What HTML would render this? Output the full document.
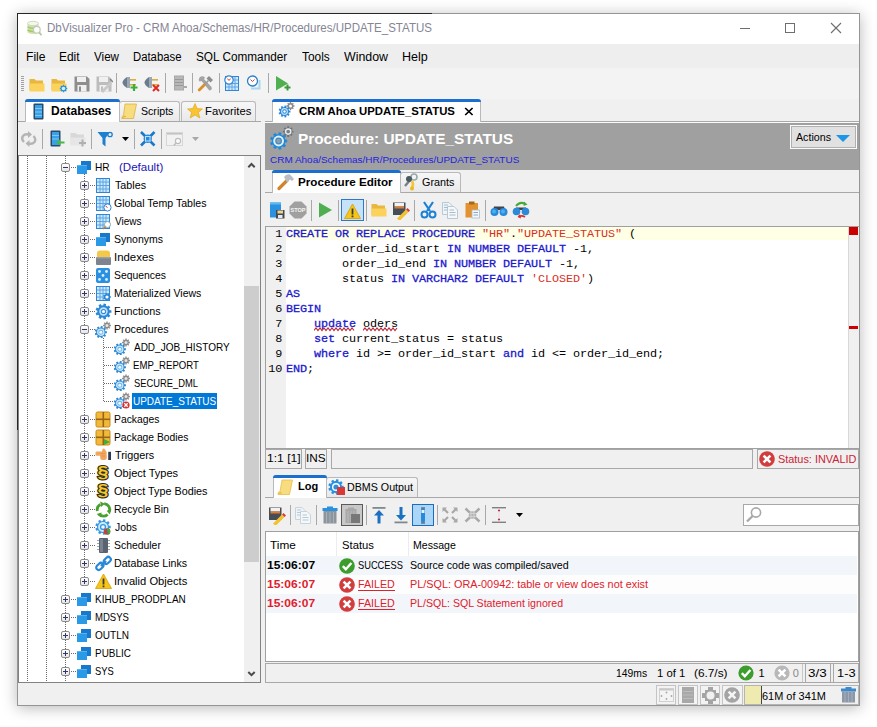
<!DOCTYPE html><html><head><meta charset="utf-8"><style>
html,body{margin:0;padding:0}
body{width:877px;height:727px;background:#fff;position:relative;overflow:hidden;font-family:"Liberation Sans",sans-serif}
body div{position:absolute;box-sizing:border-box}
svg{position:absolute}
</style></head><body>
<div style="left:17px;top:13px;width:843px;height:693px;background:#f0f0f0;box-shadow:0 2px 14px rgba(0,0,0,0.28);"></div>
<div style="left:17px;top:13px;width:843px;height:1px;background:#959595"></div>
<div style="left:17px;top:13px;width:415px;height:1px;background:#262626"></div>
<div style="left:859px;top:13px;width:1px;height:693px;background:#959595"></div>
<div style="left:17px;top:705px;width:843px;height:1px;background:#959595"></div>
<div style="left:17px;top:13px;width:1px;height:693px;background:#959595"></div>
<div style="left:17px;top:13px;width:1px;height:417px;background:#262626"></div>
<div style="left:18px;top:14px;width:841px;height:30px;background:#fff"></div>
<div style="left:18px;top:44px;width:841px;height:24px;background:#eeeeee"></div>
<div style="left:18px;top:68px;width:841px;height:31px;background:#f3f3f3"></div>
<div style="left:47.05234768549734px;top:22.42px;font-family:'Liberation Sans', sans-serif;font-size:12.5px;line-height:12.5px;font-weight:400;color:#858594;white-space:pre;transform:scaleX(0.9242);transform-origin:0 0;">DbVisualizer Pro - CRM Ahoa/Schemas/HR/Procedures/UPDATE_STATUS</div>
<div style="left:25.50553794346299px;top:50.84px;font-family:'Liberation Sans', sans-serif;font-size:12px;line-height:12px;font-weight:400;color:#000;white-space:pre;transform:scaleX(1.0102);transform-origin:0 0;">File</div>
<div style="left:58.520908797475165px;top:50.84px;font-family:'Liberation Sans', sans-serif;font-size:12px;line-height:12px;font-weight:400;color:#000;white-space:pre;transform:scaleX(0.9946);transform-origin:0 0;">Edit</div>
<div style="left:93.94883945137701px;top:50.84px;font-family:'Liberation Sans', sans-serif;font-size:12px;line-height:12px;font-weight:400;color:#000;white-space:pre;transform:scaleX(0.9702);transform-origin:0 0;">View</div>
<div style="left:132.57186684533465px;top:50.84px;font-family:'Liberation Sans', sans-serif;font-size:12px;line-height:12px;font-weight:400;color:#000;white-space:pre;transform:scaleX(0.9429);transform-origin:0 0;">Database</div>
<div style="left:195.9649817814743px;top:50.84px;font-family:'Liberation Sans', sans-serif;font-size:12px;line-height:12px;font-weight:400;color:#000;white-space:pre;transform:scaleX(0.9818);transform-origin:0 0;">SQL Commander</div>
<div style="left:301.7335221421215px;top:50.84px;font-family:'Liberation Sans', sans-serif;font-size:12px;line-height:12px;font-weight:400;color:#000;white-space:pre;transform:scaleX(0.9887);transform-origin:0 0;">Tools</div>
<div style="left:343.9456032000703px;top:50.84px;font-family:'Liberation Sans', sans-serif;font-size:12px;line-height:12px;font-weight:400;color:#000;white-space:pre;transform:scaleX(1.0315);transform-origin:0 0;">Window</div>
<div style="left:402.2727730277121px;top:50.84px;font-family:'Liberation Sans', sans-serif;font-size:12px;line-height:12px;font-weight:400;color:#000;white-space:pre;transform:scaleX(1.0435);transform-origin:0 0;">Help</div>
<div style="left:18px;top:121px;width:243px;height:1px;background:#a8a8a8"></div>
<div style="left:25px;top:99px;width:95px;height:23px;background:#fff;border:1px solid #b9b9b9;border-bottom:none;box-sizing:border-box;border-radius:3px 3px 0 0"></div>
<div style="left:25px;top:99px;width:95px;height:3px;background:#1b6fd0;border-radius:3px 3px 0 0"></div>
<div style="left:51.19364492843262px;top:104.84px;font-family:'Liberation Sans', sans-serif;font-size:12px;line-height:12px;font-weight:700;color:#000;white-space:pre;transform:scaleX(1.0045);transform-origin:0 0;">Databases</div>
<div style="left:119px;top:101px;width:61px;height:20px;background:linear-gradient(#f7f7f7,#e9e9e9);border:1px solid #b9b9b9;border-bottom:none;box-sizing:border-box;border-radius:3px 3px 0 0"></div>
<div style="left:140.5191139681018px;top:105.69px;font-family:'Liberation Sans', sans-serif;font-size:11px;line-height:11px;font-weight:400;color:#000;white-space:pre;transform:scaleX(0.9627);transform-origin:0 0;">Scripts</div>
<div style="left:181px;top:101px;width:75px;height:20px;background:linear-gradient(#f7f7f7,#e9e9e9);border:1px solid #b9b9b9;border-bottom:none;box-sizing:border-box;border-radius:3px 3px 0 0"></div>
<div style="left:204.5757313459112px;top:105.69px;font-family:'Liberation Sans', sans-serif;font-size:11px;line-height:11px;font-weight:400;color:#000;white-space:pre;transform:scaleX(1.0243);transform-origin:0 0;">Favorites</div>
<div style="left:18px;top:155px;width:243px;height:528px;background:#fff;border:1px solid #828282;box-sizing:border-box"></div>
<div style="left:244px;top:156px;width:16px;height:526px;background:#f0f0f0"></div>
<div style="left:94.67093370141146px;top:161.69px;font-family:'Liberation Sans', sans-serif;font-size:11px;line-height:11px;font-weight:400;color:#000;white-space:pre;transform:scaleX(0.9188);transform-origin:0 0;">HR</div>
<div style="left:114.55888324873096px;top:179.69px;font-family:'Liberation Sans', sans-serif;font-size:11px;line-height:11px;font-weight:400;color:#000;white-space:pre;transform:scaleX(0.9759);transform-origin:0 0;">Tables</div>
<div style="left:114.26797400658181px;top:197.69px;font-family:'Liberation Sans', sans-serif;font-size:11px;line-height:11px;font-weight:400;color:#000;white-space:pre;transform:scaleX(0.9617);transform-origin:0 0;">Global Temp Tables</div>
<div style="left:114.7558668293742px;top:215.69px;font-family:'Liberation Sans', sans-serif;font-size:11px;line-height:11px;font-weight:400;color:#000;white-space:pre;transform:scaleX(0.9130);transform-origin:0 0;">Views</div>
<div style="left:114.32280479132689px;top:233.69px;font-family:'Liberation Sans', sans-serif;font-size:11px;line-height:11px;font-weight:400;color:#000;white-space:pre;transform:scaleX(0.9553);transform-origin:0 0;">Synonyms</div>
<div style="left:113.7468816756109px;top:251.69px;font-family:'Liberation Sans', sans-serif;font-size:11px;line-height:11px;font-weight:400;color:#000;white-space:pre;transform:scaleX(1.0374);transform-origin:0 0;">Indexes</div>
<div style="left:114.32948108996106px;top:269.69px;font-family:'Liberation Sans', sans-serif;font-size:11px;line-height:11px;font-weight:400;color:#000;white-space:pre;transform:scaleX(0.9420);transform-origin:0 0;">Sequences</div>
<div style="left:113.93865135888335px;top:287.69px;font-family:'Liberation Sans', sans-serif;font-size:11px;line-height:11px;font-weight:400;color:#000;white-space:pre;transform:scaleX(0.9546);transform-origin:0 0;">Materialized Views</div>
<div style="left:113.91879949979158px;top:305.69px;font-family:'Liberation Sans', sans-serif;font-size:11px;line-height:11px;font-weight:400;color:#000;white-space:pre;transform:scaleX(0.9766);transform-origin:0 0;">Functions</div>
<div style="left:113.92471946136583px;top:323.69px;font-family:'Liberation Sans', sans-serif;font-size:11px;line-height:11px;font-weight:400;color:#000;white-space:pre;transform:scaleX(0.9700);transform-origin:0 0;">Procedures</div>
<div style="left:133.98049554402917px;top:341.69px;font-family:'Liberation Sans', sans-serif;font-size:11px;line-height:11px;font-weight:400;color:#000;white-space:pre;transform:scaleX(0.9078);transform-origin:0 0;">ADD_JOB_HISTORY</div>
<div style="left:133.21327202985515px;top:359.69px;font-family:'Liberation Sans', sans-serif;font-size:11px;line-height:11px;font-weight:400;color:#000;white-space:pre;transform:scaleX(0.8719);transform-origin:0 0;">EMP_REPORT</div>
<div style="left:133.57522829961235px;top:377.69px;font-family:'Liberation Sans', sans-serif;font-size:11px;line-height:11px;font-weight:400;color:#000;white-space:pre;transform:scaleX(0.8504);transform-origin:0 0;">SECURE_DML</div>
<div style="left:132px;top:393px;width:85px;height:16px;background:#0078d7"></div>
<div style="left:133.22959460359442px;top:395.69px;font-family:'Liberation Sans', sans-serif;font-size:11px;line-height:11px;font-weight:400;color:#fff;white-space:pre;transform:scaleX(0.9078);transform-origin:0 0;">UPDATE_STATUS</div>
<div style="left:113.95151515151515px;top:413.69px;font-family:'Liberation Sans', sans-serif;font-size:11px;line-height:11px;font-weight:400;color:#000;white-space:pre;transform:scaleX(0.9403);transform-origin:0 0;">Packages</div>
<div style="left:113.95528714851713px;top:431.69px;font-family:'Liberation Sans', sans-serif;font-size:11px;line-height:11px;font-weight:400;color:#000;white-space:pre;transform:scaleX(0.9361);transform-origin:0 0;">Package Bodies</div>
<div style="left:114.5578801732435px;top:449.69px;font-family:'Liberation Sans', sans-serif;font-size:11px;line-height:11px;font-weight:400;color:#000;white-space:pre;transform:scaleX(0.9800);transform-origin:0 0;">Triggers</div>
<div style="left:114.27796349218784px;top:467.69px;font-family:'Liberation Sans', sans-serif;font-size:11px;line-height:11px;font-weight:400;color:#000;white-space:pre;transform:scaleX(1.0020);transform-origin:0 0;">Object Types</div>
<div style="left:114.28819256568106px;top:485.69px;font-family:'Liberation Sans', sans-serif;font-size:11px;line-height:11px;font-weight:400;color:#000;white-space:pre;transform:scaleX(0.9824);transform-origin:0 0;">Object Type Bodies</div>
<div style="left:113.94815730892901px;top:503.69px;font-family:'Liberation Sans', sans-serif;font-size:11px;line-height:11px;font-weight:400;color:#000;white-space:pre;transform:scaleX(0.9440);transform-origin:0 0;">Recycle Bin</div>
<div style="left:114.6377158890553px;top:521.69px;font-family:'Liberation Sans', sans-serif;font-size:11px;line-height:11px;font-weight:400;color:#000;white-space:pre;transform:scaleX(0.9442);transform-origin:0 0;">Jobs</div>
<div style="left:114.32755749666829px;top:539.69px;font-family:'Liberation Sans', sans-serif;font-size:11px;line-height:11px;font-weight:400;color:#000;white-space:pre;transform:scaleX(0.9458);transform-origin:0 0;">Scheduler</div>
<div style="left:113.93058520299607px;top:557.69px;font-family:'Liberation Sans', sans-serif;font-size:11px;line-height:11px;font-weight:400;color:#000;white-space:pre;transform:scaleX(0.9635);transform-origin:0 0;">Database Links</div>
<div style="left:113.76948443086306px;top:575.69px;font-family:'Liberation Sans', sans-serif;font-size:11px;line-height:11px;font-weight:400;color:#000;white-space:pre;transform:scaleX(1.0151);transform-origin:0 0;">Invalid Objects</div>
<div style="left:94.68338399631648px;top:593.69px;font-family:'Liberation Sans', sans-serif;font-size:11px;line-height:11px;font-weight:400;color:#000;white-space:pre;transform:scaleX(0.9050);transform-origin:0 0;">KIHUB_PRODPLAN</div>
<div style="left:94.71756964621433px;top:611.69px;font-family:'Liberation Sans', sans-serif;font-size:11px;line-height:11px;font-weight:400;color:#000;white-space:pre;transform:scaleX(0.8671);transform-origin:0 0;">MDSYS</div>
<div style="left:95.02493709561466px;top:629.69px;font-family:'Liberation Sans', sans-serif;font-size:11px;line-height:11px;font-weight:400;color:#000;white-space:pre;transform:scaleX(0.9118);transform-origin:0 0;">OUTLN</div>
<div style="left:94.68490844621425px;top:647.69px;font-family:'Liberation Sans', sans-serif;font-size:11px;line-height:11px;font-weight:400;color:#000;white-space:pre;transform:scaleX(0.9033);transform-origin:0 0;">PUBLIC</div>
<div style="left:95.07438050336978px;top:665.69px;font-family:'Liberation Sans', sans-serif;font-size:11px;line-height:11px;font-weight:400;color:#000;white-space:pre;transform:scaleX(0.8521);transform-origin:0 0;">SYS</div>
<div style="left:118.8846464029648px;top:161.69px;font-family:'Liberation Sans', sans-serif;font-size:11px;line-height:11px;font-weight:400;color:#1c14b4;white-space:pre;transform:scaleX(1.0487);transform-origin:0 0;">(Default)</div>
<div style="left:265px;top:121px;width:594px;height:1px;background:#a8a8a8"></div>
<div style="left:272px;top:99px;width:209px;height:23px;background:#fff;border:1px solid #b9b9b9;border-bottom:none;border-radius:3px 3px 0 0"></div>
<div style="left:272px;top:99px;width:209px;height:3px;background:#1b6fd0;border-radius:3px 3px 0 0"></div>
<div style="left:298.83461439478424px;top:105.77px;font-family:'Liberation Sans', sans-serif;font-size:11.5px;line-height:11.5px;font-weight:700;color:#000;white-space:pre;transform:scaleX(0.9867);transform-origin:0 0;">CRM Ahoa UPDATE_STATUS</div>
<svg style="position:absolute;left:464px;top:107px" width="10" height="9" viewBox="0 0 10 9"><path d="M1.2 1 L8.6 8 M8.6 1 L1.2 8" stroke="#000" stroke-width="1.7"/></svg>
<div style="left:265px;top:122px;width:594px;height:1px;background:#fbfbfb"></div>
<div style="left:265px;top:123px;width:594px;height:47px;background:#a0a0a0"></div>
<div style="left:297.97220586312994px;top:131.30px;font-family:'Liberation Sans', sans-serif;font-size:15px;line-height:15px;font-weight:700;color:#fff;white-space:pre;transform:scaleX(1.0243);transform-origin:0 0;">Procedure: UPDATE_STATUS</div>
<div style="left:269.8934209804158px;top:154.87px;font-family:'Liberation Sans', sans-serif;font-size:9.6px;line-height:9.6px;font-weight:400;color:#2222e0;white-space:pre;transform:scaleX(1.0391);transform-origin:0 0;">CRM Ahoa/Schemas/HR/Procedures/UPDATE_STATUS</div>
<div style="left:790px;top:125px;width:67px;height:24px;background:#e1e1e1;border:1px solid #fbfbfb;box-shadow:inset 0 0 0 1px #b0b0b0"></div>
<div style="left:795.9791498439251px;top:132.27px;font-family:'Liberation Sans', sans-serif;font-size:11.5px;line-height:11.5px;font-weight:400;color:#000;white-space:pre;transform:scaleX(0.9283);transform-origin:0 0;">Actions</div>
<svg style="position:absolute;left:835px;top:134px" width="16" height="9" viewBox="0 0 16 9"><path d="M1 1 L15 1 L8 8 Z" fill="#1c96e6"/></svg>
<div style="left:265px;top:192px;width:594px;height:1px;background:#a8a8a8"></div>
<div style="left:272px;top:170px;width:129px;height:23px;background:#fff;border:1px solid #b9b9b9;border-bottom:none;border-radius:3px 3px 0 0"></div>
<div style="left:272px;top:170px;width:129px;height:3px;background:#1b6fd0;border-radius:3px 3px 0 0"></div>
<div style="left:297.6203035314719px;top:177.27px;font-family:'Liberation Sans', sans-serif;font-size:11.5px;line-height:11.5px;font-weight:700;color:#000;white-space:pre;transform:scaleX(1.0135);transform-origin:0 0;">Procedure Editor</div>
<div style="left:400px;top:172px;width:61px;height:20px;background:linear-gradient(#f7f7f7,#e9e9e9);border:1px solid #b9b9b9;border-bottom:none;border-radius:3px 3px 0 0"></div>
<div style="left:422.2564051871461px;top:176.69px;font-family:'Liberation Sans', sans-serif;font-size:11px;line-height:11px;font-weight:400;color:#000;white-space:pre;transform:scaleX(0.9826);transform-origin:0 0;">Grants</div>
<div style="left:265px;top:226px;width:594px;height:223px;background:#fff;border:1px solid #a0a0a0;border-right:none"></div>
<div style="left:266px;top:227px;width:20px;height:221px;background:#f0f0f0"></div>
<div style="left:286px;top:227px;width:562px;height:13px;background:#ffffe6"></div>
<div style="left:848px;top:227px;width:11px;height:221px;background:#f0f0f0;border-left:1px solid #d8d8d8"></div>
<div style="left:849px;top:227px;width:9px;height:8px;background:#cc0000"></div>
<div style="left:849px;top:326px;width:9px;height:3px;background:#cc0000"></div>
<div style="left:275.3px;top:228.96px;font-family:'Liberation Mono', monospace;font-size:11.8px;line-height:11.8px;font-weight:400;color:#000;white-space:pre;letter-spacing:-0.080px;">1</div>
<div style="left:286.0px;top:228.96px;font-family:'Liberation Mono', monospace;font-size:11.8px;line-height:11.8px;font-weight:400;color:#1a1acc;white-space:pre;letter-spacing:-0.080px;-webkit-text-stroke:0.3px #1a1acc;">CREATE OR REPLACE PROCEDURE </div>
<div style="left:482.0px;top:228.96px;font-family:'Liberation Mono', monospace;font-size:11.8px;line-height:11.8px;font-weight:400;color:#d8301e;white-space:pre;letter-spacing:-0.080px;">"HR"</div>
<div style="left:510.0px;top:228.96px;font-family:'Liberation Mono', monospace;font-size:11.8px;line-height:11.8px;font-weight:400;color:#000;white-space:pre;letter-spacing:-0.080px;">.</div>
<div style="left:517.0px;top:228.96px;font-family:'Liberation Mono', monospace;font-size:11.8px;line-height:11.8px;font-weight:400;color:#d8301e;white-space:pre;letter-spacing:-0.080px;">"UPDATE_STATUS"</div>
<div style="left:629.0px;top:228.96px;font-family:'Liberation Mono', monospace;font-size:11.8px;line-height:11.8px;font-weight:400;color:#000;white-space:pre;letter-spacing:-0.080px;">(</div>
<div style="left:275.3px;top:243.96px;font-family:'Liberation Mono', monospace;font-size:11.8px;line-height:11.8px;font-weight:400;color:#000;white-space:pre;letter-spacing:-0.080px;">2</div>
<div style="left:342.0px;top:243.96px;font-family:'Liberation Mono', monospace;font-size:11.8px;line-height:11.8px;font-weight:400;color:#000;white-space:pre;letter-spacing:-0.080px;">order_id_start </div>
<div style="left:447.0px;top:243.96px;font-family:'Liberation Mono', monospace;font-size:11.8px;line-height:11.8px;font-weight:400;color:#1a1acc;white-space:pre;letter-spacing:-0.080px;-webkit-text-stroke:0.3px #1a1acc;">IN NUMBER DEFAULT</div>
<div style="left:573.0px;top:243.96px;font-family:'Liberation Mono', monospace;font-size:11.8px;line-height:11.8px;font-weight:400;color:#000;white-space:pre;letter-spacing:-0.080px;">-1,</div>
<div style="left:275.3px;top:258.96px;font-family:'Liberation Mono', monospace;font-size:11.8px;line-height:11.8px;font-weight:400;color:#000;white-space:pre;letter-spacing:-0.080px;">3</div>
<div style="left:342.0px;top:258.96px;font-family:'Liberation Mono', monospace;font-size:11.8px;line-height:11.8px;font-weight:400;color:#000;white-space:pre;letter-spacing:-0.080px;">order_id_end </div>
<div style="left:433.0px;top:258.96px;font-family:'Liberation Mono', monospace;font-size:11.8px;line-height:11.8px;font-weight:400;color:#1a1acc;white-space:pre;letter-spacing:-0.080px;-webkit-text-stroke:0.3px #1a1acc;">IN NUMBER DEFAULT</div>
<div style="left:559.0px;top:258.96px;font-family:'Liberation Mono', monospace;font-size:11.8px;line-height:11.8px;font-weight:400;color:#000;white-space:pre;letter-spacing:-0.080px;">-1,</div>
<div style="left:275.3px;top:273.96px;font-family:'Liberation Mono', monospace;font-size:11.8px;line-height:11.8px;font-weight:400;color:#000;white-space:pre;letter-spacing:-0.080px;">4</div>
<div style="left:342.0px;top:273.96px;font-family:'Liberation Mono', monospace;font-size:11.8px;line-height:11.8px;font-weight:400;color:#000;white-space:pre;letter-spacing:-0.080px;">status </div>
<div style="left:391.0px;top:273.96px;font-family:'Liberation Mono', monospace;font-size:11.8px;line-height:11.8px;font-weight:400;color:#1a1acc;white-space:pre;letter-spacing:-0.080px;-webkit-text-stroke:0.3px #1a1acc;">IN VARCHAR2 DEFAULT</div>
<div style="left:531.0px;top:273.96px;font-family:'Liberation Mono', monospace;font-size:11.8px;line-height:11.8px;font-weight:400;color:#d8301e;white-space:pre;letter-spacing:-0.080px;">'CLOSED'</div>
<div style="left:587.0px;top:273.96px;font-family:'Liberation Mono', monospace;font-size:11.8px;line-height:11.8px;font-weight:400;color:#000;white-space:pre;letter-spacing:-0.080px;">)</div>
<div style="left:275.3px;top:288.96px;font-family:'Liberation Mono', monospace;font-size:11.8px;line-height:11.8px;font-weight:400;color:#000;white-space:pre;letter-spacing:-0.080px;">5</div>
<div style="left:286.0px;top:288.96px;font-family:'Liberation Mono', monospace;font-size:11.8px;line-height:11.8px;font-weight:400;color:#1a1acc;white-space:pre;letter-spacing:-0.080px;-webkit-text-stroke:0.3px #1a1acc;">AS</div>
<div style="left:275.3px;top:303.96px;font-family:'Liberation Mono', monospace;font-size:11.8px;line-height:11.8px;font-weight:400;color:#000;white-space:pre;letter-spacing:-0.080px;">6</div>
<div style="left:286.0px;top:303.96px;font-family:'Liberation Mono', monospace;font-size:11.8px;line-height:11.8px;font-weight:400;color:#1a1acc;white-space:pre;letter-spacing:-0.080px;-webkit-text-stroke:0.3px #1a1acc;">BEGIN</div>
<div style="left:275.3px;top:318.96px;font-family:'Liberation Mono', monospace;font-size:11.8px;line-height:11.8px;font-weight:400;color:#000;white-space:pre;letter-spacing:-0.080px;">7</div>
<div style="left:314.0px;top:318.96px;font-family:'Liberation Mono', monospace;font-size:11.8px;line-height:11.8px;font-weight:400;color:#1a1acc;white-space:pre;letter-spacing:-0.080px;-webkit-text-stroke:0.3px #1a1acc;">update</div>
<div style="left:363.0px;top:318.96px;font-family:'Liberation Mono', monospace;font-size:11.8px;line-height:11.8px;font-weight:400;color:#000;white-space:pre;letter-spacing:-0.080px;">oders</div>
<div style="left:275.3px;top:333.96px;font-family:'Liberation Mono', monospace;font-size:11.8px;line-height:11.8px;font-weight:400;color:#000;white-space:pre;letter-spacing:-0.080px;">8</div>
<div style="left:314.0px;top:333.96px;font-family:'Liberation Mono', monospace;font-size:11.8px;line-height:11.8px;font-weight:400;color:#1a1acc;white-space:pre;letter-spacing:-0.080px;-webkit-text-stroke:0.3px #1a1acc;">set</div>
<div style="left:342.0px;top:333.96px;font-family:'Liberation Mono', monospace;font-size:11.8px;line-height:11.8px;font-weight:400;color:#000;white-space:pre;letter-spacing:-0.080px;">current_status = status</div>
<div style="left:275.3px;top:348.96px;font-family:'Liberation Mono', monospace;font-size:11.8px;line-height:11.8px;font-weight:400;color:#000;white-space:pre;letter-spacing:-0.080px;">9</div>
<div style="left:314.0px;top:348.96px;font-family:'Liberation Mono', monospace;font-size:11.8px;line-height:11.8px;font-weight:400;color:#1a1acc;white-space:pre;letter-spacing:-0.080px;-webkit-text-stroke:0.3px #1a1acc;">where</div>
<div style="left:356.0px;top:348.96px;font-family:'Liberation Mono', monospace;font-size:11.8px;line-height:11.8px;font-weight:400;color:#000;white-space:pre;letter-spacing:-0.080px;">id &gt;= order_id_start </div>
<div style="left:503.0px;top:348.96px;font-family:'Liberation Mono', monospace;font-size:11.8px;line-height:11.8px;font-weight:400;color:#1a1acc;white-space:pre;letter-spacing:-0.080px;-webkit-text-stroke:0.3px #1a1acc;">and</div>
<div style="left:531.0px;top:348.96px;font-family:'Liberation Mono', monospace;font-size:11.8px;line-height:11.8px;font-weight:400;color:#000;white-space:pre;letter-spacing:-0.080px;">id &lt;= order_id_end;</div>
<div style="left:268.3px;top:363.96px;font-family:'Liberation Mono', monospace;font-size:11.8px;line-height:11.8px;font-weight:400;color:#000;white-space:pre;letter-spacing:-0.080px;">10</div>
<div style="left:286.0px;top:363.96px;font-family:'Liberation Mono', monospace;font-size:11.8px;line-height:11.8px;font-weight:400;color:#1a1acc;white-space:pre;letter-spacing:-0.080px;-webkit-text-stroke:0.3px #1a1acc;">END</div>
<div style="left:307.0px;top:363.96px;font-family:'Liberation Mono', monospace;font-size:11.8px;line-height:11.8px;font-weight:400;color:#000;white-space:pre;letter-spacing:-0.080px;">;</div>
<svg style="position:absolute;left:314px;top:327px" width="42" height="5" viewBox="0 0 42 5"><polyline points="0.0,3.5 2.0,1 4.0,3.5 6.0,1 8.0,3.5 10.0,1 12.0,3.5 14.0,1 16.0,3.5 18.0,1 20.0,3.5 22.0,1 24.0,3.5 26.0,1 28.0,3.5 30.0,1 32.0,3.5 34.0,1 36.0,3.5 38.0,1 40.0,3.5" fill="none" stroke="#b82838" stroke-width="1.1"/></svg>
<svg style="position:absolute;left:363px;top:327px" width="36" height="5" viewBox="0 0 36 5"><polyline points="0.0,3.5 2.0,1 4.0,3.5 6.0,1 8.0,3.5 10.0,1 12.0,3.5 14.0,1 16.0,3.5 18.0,1 20.0,3.5 22.0,1 24.0,3.5 26.0,1 28.0,3.5 30.0,1 32.0,3.5 34.0,1" fill="none" stroke="#b82838" stroke-width="1.1"/></svg>
<div style="left:265px;top:449px;width:37px;height:20px;background:#f0f0f0;border:1px solid #a8a8a8"></div>
<div style="left:266.5797108977308px;top:452.69px;font-family:'Liberation Sans', sans-serif;font-size:11px;line-height:11px;font-weight:400;color:#000;white-space:pre;transform:scaleX(1.0983);transform-origin:0 0;">1:1 [1]</div>
<div style="left:305px;top:449px;width:22px;height:20px;background:#f0f0f0;border:1px solid #a8a8a8"></div>
<div style="left:305.91347394509245px;top:452.69px;font-family:'Liberation Sans', sans-serif;font-size:11px;line-height:11px;font-weight:400;color:#000;white-space:pre;transform:scaleX(1.0703);transform-origin:0 0;">INS</div>
<div style="left:331px;top:449px;width:422px;height:20px;background:#f0f0f0;border:1px solid #a8a8a8"></div>
<div style="left:757px;top:449px;width:102px;height:20px;background:#f0f0f0;border:1px solid #a8a8a8"></div>
<div style="left:778.2058801240003px;top:453.69px;font-family:'Liberation Sans', sans-serif;font-size:11px;line-height:11px;font-weight:400;color:#cc2233;white-space:pre;transform:scaleX(0.9892);transform-origin:0 0;">Status: INVALID</div>
<div style="left:265px;top:497px;width:594px;height:1px;background:#a8a8a8"></div>
<div style="left:273px;top:475px;width:54px;height:23px;background:#fff;border:1px solid #b9b9b9;border-bottom:none;border-radius:3px 3px 0 0"></div>
<div style="left:273px;top:475px;width:54px;height:3px;background:#1b6fd0;border-radius:3px 3px 0 0"></div>
<div style="left:297.7635340247913px;top:481.27px;font-family:'Liberation Sans', sans-serif;font-size:11.5px;line-height:11.5px;font-weight:700;color:#000;white-space:pre;transform:scaleX(0.9573);transform-origin:0 0;">Log</div>
<div style="left:326px;top:477px;width:92px;height:20px;background:linear-gradient(#f7f7f7,#e9e9e9);border:1px solid #b9b9b9;border-bottom:none;border-radius:3px 3px 0 0"></div>
<div style="left:347.422933834514px;top:481.69px;font-family:'Liberation Sans', sans-serif;font-size:11px;line-height:11px;font-weight:400;color:#000;white-space:pre;transform:scaleX(0.9720);transform-origin:0 0;">DBMS Output</div>
<div style="left:743px;top:504px;width:116px;height:22px;background:#fff;border:1px solid #a8a8a8"></div>
<div style="left:265px;top:531px;width:594px;height:131px;background:#fff;border:1px solid #a0a0a0"></div>
<div style="left:336px;top:532px;width:1px;height:24px;background:#ececec"></div>
<div style="left:408px;top:532px;width:1px;height:24px;background:#ececec"></div>
<div style="left:266px;top:556px;width:591px;height:19px;background:#f2f5fa"></div>
<div style="left:266px;top:575px;width:591px;height:19px;background:#fdfdfe"></div>
<div style="left:266px;top:594px;width:591px;height:19px;background:#f2f5fa"></div>
<div style="left:270.43489354246776px;top:539.99px;font-family:'Liberation Sans', sans-serif;font-size:11px;line-height:11px;font-weight:400;color:#000;white-space:pre;transform:scaleX(1.0730);transform-origin:0 0;">Time</div>
<div style="left:341.7887173775795px;top:539.99px;font-family:'Liberation Sans', sans-serif;font-size:11px;line-height:11px;font-weight:400;color:#000;white-space:pre;transform:scaleX(1.0236);transform-origin:0 0;">Status</div>
<div style="left:413.43396037980534px;top:539.99px;font-family:'Liberation Sans', sans-serif;font-size:11px;line-height:11px;font-weight:400;color:#000;white-space:pre;transform:scaleX(0.9598);transform-origin:0 0;">Message</div>
<div style="left:266.9432803718169px;top:559.57px;font-family:'Liberation Sans', sans-serif;font-size:11.5px;line-height:11.5px;font-weight:700;color:#000;white-space:pre;transform:scaleX(1.0447);transform-origin:0 0;">15:06:07</div>
<div style="left:358.4787713959837px;top:559.99px;font-family:'Liberation Sans', sans-serif;font-size:11px;line-height:11px;font-weight:400;color:#000;white-space:pre;transform:scaleX(0.8433);transform-origin:0 0;">SUCCESS</div>
<div style="left:410.2163000046232px;top:559.99px;font-family:'Liberation Sans', sans-serif;font-size:11px;line-height:11px;font-weight:400;color:#000;white-space:pre;transform:scaleX(0.9683);transform-origin:0 0;">Source code was compiled/saved</div>
<div style="left:266.9432803718169px;top:578.57px;font-family:'Liberation Sans', sans-serif;font-size:11.5px;line-height:11.5px;font-weight:700;color:#e0202a;white-space:pre;transform:scaleX(1.0447);transform-origin:0 0;">15:06:07</div>
<div style="left:358.024247529068px;top:578.99px;font-family:'Liberation Sans', sans-serif;font-size:11px;line-height:11px;font-weight:400;color:#e0202a;white-space:pre;transform:scaleX(0.9705);transform-origin:0 0;">FAILED</div>
<div style="left:358px;top:590.3px;width:37px;height:1px;background:#e0202a"></div>
<div style="left:266.9432803718169px;top:597.57px;font-family:'Liberation Sans', sans-serif;font-size:11.5px;line-height:11.5px;font-weight:700;color:#e0202a;white-space:pre;transform:scaleX(1.0447);transform-origin:0 0;">15:06:07</div>
<div style="left:358.024247529068px;top:597.99px;font-family:'Liberation Sans', sans-serif;font-size:11px;line-height:11px;font-weight:400;color:#e0202a;white-space:pre;transform:scaleX(0.9705);transform-origin:0 0;">FAILED</div>
<div style="left:358px;top:609.3px;width:37px;height:1px;background:#e0202a"></div>
<div style="left:409.8108633843466px;top:578.99px;font-family:'Liberation Sans', sans-serif;font-size:11px;line-height:11px;font-weight:400;color:#e0202a;white-space:pre;transform:scaleX(0.9854);transform-origin:0 0;">PL/SQL: ORA-00942: table or view does not exist</div>
<div style="left:409.83238285873233px;top:597.99px;font-family:'Liberation Sans', sans-serif;font-size:11px;line-height:11px;font-weight:400;color:#e0202a;white-space:pre;transform:scaleX(0.9615);transform-origin:0 0;">PL/SQL: SQL Statement ignored</div>
<div style="left:265px;top:663px;width:594px;height:20px;background:#f0f0f0;border:1px solid #a8a8a8"></div>
<div style="left:802px;top:664px;width:1px;height:18px;background:#c8c8c8"></div>
<div style="left:805px;top:663px;width:26px;height:20px;background:#f0f0f0;border:1px solid #a8a8a8"></div>
<div style="left:833px;top:663px;width:26px;height:20px;background:#f0f0f0;border:1px solid #a8a8a8"></div>
<div style="left:615.6116364914748px;top:667.69px;font-family:'Liberation Sans', sans-serif;font-size:11px;line-height:11px;font-weight:400;color:#000;white-space:pre;transform:scaleX(0.9409);transform-origin:0 0;">149ms</div>
<div style="left:656.8378771941359px;top:667.69px;font-family:'Liberation Sans', sans-serif;font-size:11px;line-height:11px;font-weight:400;color:#000;white-space:pre;transform:scaleX(1.0289);transform-origin:0 0;">1 of 1</div>
<div style="left:694.2676844123456px;top:667.69px;font-family:'Liberation Sans', sans-serif;font-size:11px;line-height:11px;font-weight:400;color:#000;white-space:pre;transform:scaleX(1.0736);transform-origin:0 0;">(6.7/s)</div>
<div style="left:758.4px;top:667.69px;font-family:'Liberation Sans', sans-serif;font-size:11px;line-height:11px;font-weight:400;color:#000;white-space:pre;">1</div>
<div style="left:792.7px;top:667.69px;font-family:'Liberation Sans', sans-serif;font-size:11px;line-height:11px;font-weight:400;color:#888;white-space:pre;">0</div>
<div style="left:808.4904282642456px;top:667.69px;font-family:'Liberation Sans', sans-serif;font-size:11px;line-height:11px;font-weight:400;color:#000;white-space:pre;transform:scaleX(1.2163);transform-origin:0 0;">3/3</div>
<div style="left:836.5227292827452px;top:667.69px;font-family:'Liberation Sans', sans-serif;font-size:11px;line-height:11px;font-weight:400;color:#000;white-space:pre;transform:scaleX(1.1663);transform-origin:0 0;">1-3</div>
<div style="left:656px;top:685px;width:20px;height:20px;background:#f3f3f3;border:1px solid #c4c4c4"></div>
<div style="left:678px;top:685px;width:20px;height:20px;background:#f3f3f3;border:1px solid #c4c4c4"></div>
<div style="left:700px;top:685px;width:20px;height:20px;background:#f3f3f3;border:1px solid #c4c4c4"></div>
<div style="left:722px;top:685px;width:21px;height:20px;background:#f3f3f3;border:1px solid #c4c4c4"></div>
<div style="left:744px;top:685px;width:115px;height:20px;background:#f0f0f0;border:1px solid #b4b4b4"></div>
<div style="left:745px;top:686px;width:16px;height:18px;background:#eeeab0"></div>
<div style="left:761px;top:686px;width:1px;height:18px;background:#444"></div>
<div style="left:761.943493150685px;top:690.69px;font-family:'Liberation Sans', sans-serif;font-size:11px;line-height:11px;font-weight:400;color:#000;white-space:pre;transform:scaleX(0.9963);transform-origin:0 0;">61M of 341M</div>
<div style="left:27px;top:156px;width:1px;height:526px;background:repeating-linear-gradient(to bottom,#6a6a6a 0 1px,transparent 1px 2px)"></div>
<div style="left:46px;top:156px;width:1px;height:526px;background:repeating-linear-gradient(to bottom,#6a6a6a 0 1px,transparent 1px 2px)"></div>
<div style="left:65px;top:156px;width:1px;height:526px;background:repeating-linear-gradient(to bottom,#6a6a6a 0 1px,transparent 1px 2px)"></div>
<div style="left:84px;top:172px;width:1px;height:414px;background:repeating-linear-gradient(to bottom,#6a6a6a 0 1px,transparent 1px 2px)"></div>
<div style="left:103px;top:338px;width:1px;height:64px;background:repeating-linear-gradient(to bottom,#6a6a6a 0 1px,transparent 1px 2px)"></div>
<div style="left:61px;top:163px;width:9px;height:9px;background:linear-gradient(#ffffff,#e6e6e6);border:1px solid #8a8a8a;border-radius:2px"></div>
<div style="left:63px;top:167px;width:5px;height:1px;background:#34346a"></div>
<div style="left:71px;top:167px;width:6px;height:1px;background:repeating-linear-gradient(to right,#6a6a6a 0 1px,transparent 1px 2px)"></div>
<svg style="position:absolute;left:76px;top:159px" width="16" height="16" viewBox="0 0 16 16"><rect x="5" y="2" width="10" height="9" fill="#1a78cc"/><rect x="1" y="6" width="10" height="9" fill="#2a9ae6"/><rect x="1" y="6" width="10" height="1" fill="#55b4f0"/></svg>
<div style="left:80px;top:181px;width:9px;height:9px;background:linear-gradient(#ffffff,#e6e6e6);border:1px solid #8a8a8a;border-radius:2px"></div>
<div style="left:82px;top:185px;width:5px;height:1px;background:#34346a"></div>
<div style="left:84px;top:183px;width:1px;height:5px;background:#34346a"></div>
<div style="left:90px;top:185px;width:5px;height:1px;background:repeating-linear-gradient(to right,#6a6a6a 0 1px,transparent 1px 2px)"></div>
<svg style="position:absolute;left:95px;top:177px" width="17" height="17" viewBox="0 0 17 17"><rect x="1.5" y="1.5" width="13" height="14" fill="#cfe8fb" stroke="#2f86d6"/><line x1="5.0" y1="2" x2="5.0" y2="15" stroke="#5aa6e4"/><line x1="8.0" y1="2" x2="8.0" y2="15" stroke="#5aa6e4"/><line x1="11.0" y1="2" x2="11.0" y2="15" stroke="#5aa6e4"/><line x1="2" y1="5.0" x2="14" y2="5.0" stroke="#5aa6e4"/><line x1="2" y1="8.5" x2="14" y2="8.5" stroke="#5aa6e4"/><line x1="2" y1="12.0" x2="14" y2="12.0" stroke="#5aa6e4"/></svg>
<div style="left:80px;top:199px;width:9px;height:9px;background:linear-gradient(#ffffff,#e6e6e6);border:1px solid #8a8a8a;border-radius:2px"></div>
<div style="left:82px;top:203px;width:5px;height:1px;background:#34346a"></div>
<div style="left:84px;top:201px;width:1px;height:5px;background:#34346a"></div>
<div style="left:90px;top:203px;width:5px;height:1px;background:repeating-linear-gradient(to right,#6a6a6a 0 1px,transparent 1px 2px)"></div>
<svg style="position:absolute;left:95px;top:195px" width="17" height="17" viewBox="0 0 17 17"><rect x="1.5" y="1.5" width="13" height="14" fill="#cfe8fb" stroke="#2f86d6"/><line x1="5.0" y1="2" x2="5.0" y2="15" stroke="#5aa6e4"/><line x1="8.0" y1="2" x2="8.0" y2="15" stroke="#5aa6e4"/><line x1="11.0" y1="2" x2="11.0" y2="15" stroke="#5aa6e4"/><line x1="2" y1="5.0" x2="14" y2="5.0" stroke="#5aa6e4"/><line x1="2" y1="8.5" x2="14" y2="8.5" stroke="#5aa6e4"/><line x1="2" y1="12.0" x2="14" y2="12.0" stroke="#5aa6e4"/><circle cx="12.5" cy="12.5" r="3.6" fill="#fff" stroke="#2f86d6" stroke-width="1"/><path d="M12.5 12.5 L10.5 11" stroke="#d03030" stroke-width="1"/></svg>
<div style="left:80px;top:217px;width:9px;height:9px;background:linear-gradient(#ffffff,#e6e6e6);border:1px solid #8a8a8a;border-radius:2px"></div>
<div style="left:82px;top:221px;width:5px;height:1px;background:#34346a"></div>
<div style="left:84px;top:219px;width:1px;height:5px;background:#34346a"></div>
<div style="left:90px;top:221px;width:5px;height:1px;background:repeating-linear-gradient(to right,#6a6a6a 0 1px,transparent 1px 2px)"></div>
<svg style="position:absolute;left:95px;top:213px" width="17" height="17" viewBox="0 0 17 17"><rect x="1.5" y="1.5" width="13" height="14" fill="#cfe8fb" stroke="#2f86d6"/><line x1="5.0" y1="2" x2="5.0" y2="15" stroke="#5aa6e4"/><line x1="8.0" y1="2" x2="8.0" y2="15" stroke="#5aa6e4"/><line x1="11.0" y1="2" x2="11.0" y2="15" stroke="#5aa6e4"/><line x1="2" y1="5.0" x2="14" y2="5.0" stroke="#5aa6e4"/><line x1="2" y1="8.5" x2="14" y2="8.5" stroke="#5aa6e4"/><line x1="2" y1="12.0" x2="14" y2="12.0" stroke="#5aa6e4"/><circle cx="12.5" cy="11.5" r="3" fill="#fff" stroke="#8aa" stroke-width="1"/><path d="M10.5 13.5 L8 16" stroke="#c87a30" stroke-width="1.5"/></svg>
<div style="left:80px;top:235px;width:9px;height:9px;background:linear-gradient(#ffffff,#e6e6e6);border:1px solid #8a8a8a;border-radius:2px"></div>
<div style="left:82px;top:239px;width:5px;height:1px;background:#34346a"></div>
<div style="left:84px;top:237px;width:1px;height:5px;background:#34346a"></div>
<div style="left:90px;top:239px;width:5px;height:1px;background:repeating-linear-gradient(to right,#6a6a6a 0 1px,transparent 1px 2px)"></div>
<svg style="position:absolute;left:95px;top:231px" width="16" height="16" viewBox="0 0 16 16"><rect x="5" y="2" width="10" height="9" fill="#1a78cc"/><rect x="1" y="6" width="10" height="9" fill="#2a9ae6"/><rect x="1" y="6" width="10" height="1" fill="#55b4f0"/></svg>
<div style="left:80px;top:253px;width:9px;height:9px;background:linear-gradient(#ffffff,#e6e6e6);border:1px solid #8a8a8a;border-radius:2px"></div>
<div style="left:82px;top:257px;width:5px;height:1px;background:#34346a"></div>
<div style="left:84px;top:255px;width:1px;height:5px;background:#34346a"></div>
<div style="left:90px;top:257px;width:5px;height:1px;background:repeating-linear-gradient(to right,#6a6a6a 0 1px,transparent 1px 2px)"></div>
<svg style="position:absolute;left:95px;top:249px" width="17" height="17" viewBox="0 0 17 17"><path d="M2 4 Q2 1.5 5 1.5 L12 1.5 Q15 1.5 15 4 L15 9 L2 9 Z" fill="#f4c94a"/><rect x="1" y="8" width="15" height="8" rx="1" fill="#7d8490"/><rect x="1" y="8" width="15" height="1.5" fill="#9aa0aa"/></svg>
<div style="left:80px;top:271px;width:9px;height:9px;background:linear-gradient(#ffffff,#e6e6e6);border:1px solid #8a8a8a;border-radius:2px"></div>
<div style="left:82px;top:275px;width:5px;height:1px;background:#34346a"></div>
<div style="left:84px;top:273px;width:1px;height:5px;background:#34346a"></div>
<div style="left:90px;top:275px;width:5px;height:1px;background:repeating-linear-gradient(to right,#6a6a6a 0 1px,transparent 1px 2px)"></div>
<svg style="position:absolute;left:95px;top:267px" width="16" height="17" viewBox="0 0 16 17"><rect x="1" y="1" width="14" height="15" rx="2" fill="#2a90e0"/><circle cx="4.5" cy="4.5" r="1.4" fill="#d8efff"/><circle cx="11.5" cy="4.5" r="1.4" fill="#d8efff"/><circle cx="8" cy="8.5" r="1.4" fill="#d8efff"/><circle cx="4.5" cy="12.5" r="1.4" fill="#d8efff"/><circle cx="11.5" cy="12.5" r="1.4" fill="#d8efff"/></svg>
<div style="left:80px;top:289px;width:9px;height:9px;background:linear-gradient(#ffffff,#e6e6e6);border:1px solid #8a8a8a;border-radius:2px"></div>
<div style="left:82px;top:293px;width:5px;height:1px;background:#34346a"></div>
<div style="left:84px;top:291px;width:1px;height:5px;background:#34346a"></div>
<div style="left:90px;top:293px;width:5px;height:1px;background:repeating-linear-gradient(to right,#6a6a6a 0 1px,transparent 1px 2px)"></div>
<svg style="position:absolute;left:95px;top:285px" width="17" height="17" viewBox="0 0 17 17"><rect x="1.5" y="1.5" width="13" height="14" fill="#cfe8fb" stroke="#2f86d6"/><line x1="5.0" y1="2" x2="5.0" y2="15" stroke="#5aa6e4"/><line x1="8.0" y1="2" x2="8.0" y2="15" stroke="#5aa6e4"/><line x1="11.0" y1="2" x2="11.0" y2="15" stroke="#5aa6e4"/><line x1="2" y1="5.0" x2="14" y2="5.0" stroke="#5aa6e4"/><line x1="2" y1="8.5" x2="14" y2="8.5" stroke="#5aa6e4"/><line x1="2" y1="12.0" x2="14" y2="12.0" stroke="#5aa6e4"/><path d="M14.89,11.20 L15.92,11.20 L15.92,12.80 L14.89,12.80 L14.43,13.76 L15.07,14.56 L13.82,15.56 L13.18,14.76 L12.13,15.00 L11.91,16.00 L10.35,15.64 L10.58,14.64 L9.74,13.97 L8.82,14.42 L8.12,12.98 L9.05,12.54 L9.05,11.46 L8.12,11.02 L8.82,9.58 L9.74,10.03 L10.58,9.36 L10.35,8.36 L11.91,8.00 L12.13,9.00 L13.18,9.24 L13.82,8.44 L15.07,9.44 L14.43,10.24 Z" fill="#2a88d8"/><circle cx="12" cy="12" r="1.6" fill="#fff"/></svg>
<div style="left:80px;top:307px;width:9px;height:9px;background:linear-gradient(#ffffff,#e6e6e6);border:1px solid #8a8a8a;border-radius:2px"></div>
<div style="left:82px;top:311px;width:5px;height:1px;background:#34346a"></div>
<div style="left:84px;top:309px;width:1px;height:5px;background:#34346a"></div>
<div style="left:90px;top:311px;width:5px;height:1px;background:repeating-linear-gradient(to right,#6a6a6a 0 1px,transparent 1px 2px)"></div>
<svg style="position:absolute;left:95px;top:303px" width="17" height="17" viewBox="0 0 17 17"><path d="M14.56,7.21 L16.40,7.25 L16.40,9.75 L14.56,9.79 L13.97,11.41 L15.36,12.62 L13.75,14.54 L12.32,13.39 L10.82,14.25 L11.10,16.06 L8.64,16.50 L8.28,14.70 L6.58,14.40 L5.63,15.97 L3.47,14.72 L4.35,13.11 L3.24,11.79 L1.50,12.38 L0.65,10.03 L2.36,9.36 L2.36,7.64 L0.65,6.97 L1.50,4.62 L3.24,5.21 L4.35,3.89 L3.47,2.28 L5.63,1.03 L6.58,2.60 L8.28,2.30 L8.64,0.50 L11.10,0.94 L10.82,2.75 L12.32,3.61 L13.75,2.46 L15.36,4.38 L13.97,5.59 Z" fill="#2a88d8"/><circle cx="8.5" cy="8.5" r="4.2" fill="#bfe0fa"/><circle cx="8.5" cy="8.5" r="2.6" fill="#2a88d8"/><circle cx="8.5" cy="8.5" r="1.6" fill="#fff"/></svg>
<div style="left:80px;top:325px;width:9px;height:9px;background:linear-gradient(#ffffff,#e6e6e6);border:1px solid #8a8a8a;border-radius:2px"></div>
<div style="left:82px;top:329px;width:5px;height:1px;background:#34346a"></div>
<div style="left:90px;top:329px;width:5px;height:1px;background:repeating-linear-gradient(to right,#6a6a6a 0 1px,transparent 1px 2px)"></div>
<svg style="position:absolute;left:95px;top:321px" width="17" height="17" viewBox="0 0 17 17"><path d="M14.82,3.82 L15.94,3.80 L15.94,5.20 L14.82,5.18 L14.47,6.02 L15.28,6.79 L14.29,7.78 L13.52,6.97 L12.68,7.32 L12.70,8.44 L11.30,8.44 L11.32,7.32 L10.48,6.97 L9.71,7.78 L8.72,6.79 L9.53,6.02 L9.18,5.18 L8.06,5.20 L8.06,3.80 L9.18,3.82 L9.53,2.98 L8.72,2.21 L9.71,1.22 L10.48,2.03 L11.32,1.68 L11.30,0.56 L12.70,0.56 L12.68,1.68 L13.52,2.03 L14.29,1.22 L15.28,2.21 L14.47,2.98 Z" fill="#8c8c8c"/><circle cx="12" cy="4.5" r="1.5" fill="#e6e6e6"/><path d="M10.40,10.22 L11.92,10.23 L11.92,12.17 L10.40,12.18 L9.95,13.41 L11.11,14.39 L9.87,15.88 L8.69,14.90 L7.56,15.56 L7.82,17.06 L5.91,17.40 L5.64,15.90 L4.35,15.67 L3.58,16.99 L1.90,16.02 L2.66,14.69 L1.81,13.69 L0.38,14.21 L-0.29,12.38 L1.15,11.85 L1.15,10.55 L-0.29,10.02 L0.38,8.19 L1.81,8.71 L2.66,7.71 L1.90,6.38 L3.58,5.41 L4.35,6.73 L5.64,6.50 L5.91,5.00 L7.82,5.34 L7.56,6.84 L8.69,7.50 L9.87,6.52 L11.11,8.01 L9.95,8.99 Z" fill="#2f8ad6"/><circle cx="5.8" cy="11.2" r="3.1" fill="#6ab4ec" stroke="#c8e8fc" stroke-width="1.3"/><circle cx="5.8" cy="11.2" r="1.5" fill="#f0f6fa"/></svg>
<div style="left:104px;top:347px;width:10px;height:1px;background:repeating-linear-gradient(to right,#6a6a6a 0 1px,transparent 1px 2px)"></div>
<svg style="position:absolute;left:114px;top:338px" width="17" height="17" viewBox="0 0 17 17"><path d="M14.82,3.82 L15.94,3.80 L15.94,5.20 L14.82,5.18 L14.47,6.02 L15.28,6.79 L14.29,7.78 L13.52,6.97 L12.68,7.32 L12.70,8.44 L11.30,8.44 L11.32,7.32 L10.48,6.97 L9.71,7.78 L8.72,6.79 L9.53,6.02 L9.18,5.18 L8.06,5.20 L8.06,3.80 L9.18,3.82 L9.53,2.98 L8.72,2.21 L9.71,1.22 L10.48,2.03 L11.32,1.68 L11.30,0.56 L12.70,0.56 L12.68,1.68 L13.52,2.03 L14.29,1.22 L15.28,2.21 L14.47,2.98 Z" fill="#8c8c8c"/><circle cx="12" cy="4.5" r="1.5" fill="#e6e6e6"/><path d="M10.40,10.22 L11.92,10.23 L11.92,12.17 L10.40,12.18 L9.95,13.41 L11.11,14.39 L9.87,15.88 L8.69,14.90 L7.56,15.56 L7.82,17.06 L5.91,17.40 L5.64,15.90 L4.35,15.67 L3.58,16.99 L1.90,16.02 L2.66,14.69 L1.81,13.69 L0.38,14.21 L-0.29,12.38 L1.15,11.85 L1.15,10.55 L-0.29,10.02 L0.38,8.19 L1.81,8.71 L2.66,7.71 L1.90,6.38 L3.58,5.41 L4.35,6.73 L5.64,6.50 L5.91,5.00 L7.82,5.34 L7.56,6.84 L8.69,7.50 L9.87,6.52 L11.11,8.01 L9.95,8.99 Z" fill="#2f8ad6"/><circle cx="5.8" cy="11.2" r="3.1" fill="#6ab4ec" stroke="#c8e8fc" stroke-width="1.3"/><circle cx="5.8" cy="11.2" r="1.5" fill="#f0f6fa"/></svg>
<div style="left:104px;top:365px;width:10px;height:1px;background:repeating-linear-gradient(to right,#6a6a6a 0 1px,transparent 1px 2px)"></div>
<svg style="position:absolute;left:114px;top:356px" width="17" height="17" viewBox="0 0 17 17"><path d="M14.82,3.82 L15.94,3.80 L15.94,5.20 L14.82,5.18 L14.47,6.02 L15.28,6.79 L14.29,7.78 L13.52,6.97 L12.68,7.32 L12.70,8.44 L11.30,8.44 L11.32,7.32 L10.48,6.97 L9.71,7.78 L8.72,6.79 L9.53,6.02 L9.18,5.18 L8.06,5.20 L8.06,3.80 L9.18,3.82 L9.53,2.98 L8.72,2.21 L9.71,1.22 L10.48,2.03 L11.32,1.68 L11.30,0.56 L12.70,0.56 L12.68,1.68 L13.52,2.03 L14.29,1.22 L15.28,2.21 L14.47,2.98 Z" fill="#8c8c8c"/><circle cx="12" cy="4.5" r="1.5" fill="#e6e6e6"/><path d="M10.40,10.22 L11.92,10.23 L11.92,12.17 L10.40,12.18 L9.95,13.41 L11.11,14.39 L9.87,15.88 L8.69,14.90 L7.56,15.56 L7.82,17.06 L5.91,17.40 L5.64,15.90 L4.35,15.67 L3.58,16.99 L1.90,16.02 L2.66,14.69 L1.81,13.69 L0.38,14.21 L-0.29,12.38 L1.15,11.85 L1.15,10.55 L-0.29,10.02 L0.38,8.19 L1.81,8.71 L2.66,7.71 L1.90,6.38 L3.58,5.41 L4.35,6.73 L5.64,6.50 L5.91,5.00 L7.82,5.34 L7.56,6.84 L8.69,7.50 L9.87,6.52 L11.11,8.01 L9.95,8.99 Z" fill="#2f8ad6"/><circle cx="5.8" cy="11.2" r="3.1" fill="#6ab4ec" stroke="#c8e8fc" stroke-width="1.3"/><circle cx="5.8" cy="11.2" r="1.5" fill="#f0f6fa"/></svg>
<div style="left:104px;top:383px;width:10px;height:1px;background:repeating-linear-gradient(to right,#6a6a6a 0 1px,transparent 1px 2px)"></div>
<svg style="position:absolute;left:114px;top:374px" width="17" height="17" viewBox="0 0 17 17"><path d="M14.82,3.82 L15.94,3.80 L15.94,5.20 L14.82,5.18 L14.47,6.02 L15.28,6.79 L14.29,7.78 L13.52,6.97 L12.68,7.32 L12.70,8.44 L11.30,8.44 L11.32,7.32 L10.48,6.97 L9.71,7.78 L8.72,6.79 L9.53,6.02 L9.18,5.18 L8.06,5.20 L8.06,3.80 L9.18,3.82 L9.53,2.98 L8.72,2.21 L9.71,1.22 L10.48,2.03 L11.32,1.68 L11.30,0.56 L12.70,0.56 L12.68,1.68 L13.52,2.03 L14.29,1.22 L15.28,2.21 L14.47,2.98 Z" fill="#8c8c8c"/><circle cx="12" cy="4.5" r="1.5" fill="#e6e6e6"/><path d="M10.40,10.22 L11.92,10.23 L11.92,12.17 L10.40,12.18 L9.95,13.41 L11.11,14.39 L9.87,15.88 L8.69,14.90 L7.56,15.56 L7.82,17.06 L5.91,17.40 L5.64,15.90 L4.35,15.67 L3.58,16.99 L1.90,16.02 L2.66,14.69 L1.81,13.69 L0.38,14.21 L-0.29,12.38 L1.15,11.85 L1.15,10.55 L-0.29,10.02 L0.38,8.19 L1.81,8.71 L2.66,7.71 L1.90,6.38 L3.58,5.41 L4.35,6.73 L5.64,6.50 L5.91,5.00 L7.82,5.34 L7.56,6.84 L8.69,7.50 L9.87,6.52 L11.11,8.01 L9.95,8.99 Z" fill="#2f8ad6"/><circle cx="5.8" cy="11.2" r="3.1" fill="#6ab4ec" stroke="#c8e8fc" stroke-width="1.3"/><circle cx="5.8" cy="11.2" r="1.5" fill="#f0f6fa"/></svg>
<div style="left:104px;top:401px;width:10px;height:1px;background:repeating-linear-gradient(to right,#6a6a6a 0 1px,transparent 1px 2px)"></div>
<svg style="position:absolute;left:114px;top:392px" width="17" height="17" viewBox="0 0 17 17"><path d="M14.82,3.82 L15.94,3.80 L15.94,5.20 L14.82,5.18 L14.47,6.02 L15.28,6.79 L14.29,7.78 L13.52,6.97 L12.68,7.32 L12.70,8.44 L11.30,8.44 L11.32,7.32 L10.48,6.97 L9.71,7.78 L8.72,6.79 L9.53,6.02 L9.18,5.18 L8.06,5.20 L8.06,3.80 L9.18,3.82 L9.53,2.98 L8.72,2.21 L9.71,1.22 L10.48,2.03 L11.32,1.68 L11.30,0.56 L12.70,0.56 L12.68,1.68 L13.52,2.03 L14.29,1.22 L15.28,2.21 L14.47,2.98 Z" fill="#8c8c8c"/><circle cx="12" cy="4.5" r="1.5" fill="#e6e6e6"/><path d="M10.40,10.22 L11.92,10.23 L11.92,12.17 L10.40,12.18 L9.95,13.41 L11.11,14.39 L9.87,15.88 L8.69,14.90 L7.56,15.56 L7.82,17.06 L5.91,17.40 L5.64,15.90 L4.35,15.67 L3.58,16.99 L1.90,16.02 L2.66,14.69 L1.81,13.69 L0.38,14.21 L-0.29,12.38 L1.15,11.85 L1.15,10.55 L-0.29,10.02 L0.38,8.19 L1.81,8.71 L2.66,7.71 L1.90,6.38 L3.58,5.41 L4.35,6.73 L5.64,6.50 L5.91,5.00 L7.82,5.34 L7.56,6.84 L8.69,7.50 L9.87,6.52 L11.11,8.01 L9.95,8.99 Z" fill="#2f8ad6"/><circle cx="5.8" cy="11.2" r="3.1" fill="#6ab4ec" stroke="#c8e8fc" stroke-width="1.3"/><circle cx="5.8" cy="11.2" r="1.5" fill="#f0f6fa"/><circle cx="12" cy="13" r="3.6" fill="#d83030"/><path d="M10.3 11.3 L13.7 14.7 M13.7 11.3 L10.3 14.7" stroke="#fff" stroke-width="1.3"/></svg>
<div style="left:80px;top:415px;width:9px;height:9px;background:linear-gradient(#ffffff,#e6e6e6);border:1px solid #8a8a8a;border-radius:2px"></div>
<div style="left:82px;top:419px;width:5px;height:1px;background:#34346a"></div>
<div style="left:84px;top:417px;width:1px;height:5px;background:#34346a"></div>
<div style="left:90px;top:419px;width:5px;height:1px;background:repeating-linear-gradient(to right,#6a6a6a 0 1px,transparent 1px 2px)"></div>
<svg style="position:absolute;left:95px;top:411px" width="17" height="17" viewBox="0 0 17 17"><rect x="1" y="1" width="14" height="15" rx="1.5" fill="#f0b93a" stroke="#c98a1a" stroke-width="1"/><rect x="7.5" y="1" width="1.6" height="15" fill="#9a6414"/><rect x="1" y="7.5" width="14" height="1.6" fill="#9a6414"/></svg>
<div style="left:80px;top:433px;width:9px;height:9px;background:linear-gradient(#ffffff,#e6e6e6);border:1px solid #8a8a8a;border-radius:2px"></div>
<div style="left:82px;top:437px;width:5px;height:1px;background:#34346a"></div>
<div style="left:84px;top:435px;width:1px;height:5px;background:#34346a"></div>
<div style="left:90px;top:437px;width:5px;height:1px;background:repeating-linear-gradient(to right,#6a6a6a 0 1px,transparent 1px 2px)"></div>
<svg style="position:absolute;left:95px;top:429px" width="17" height="17" viewBox="0 0 17 17"><rect x="1" y="1" width="14" height="15" rx="1.5" fill="#f0b93a" stroke="#c98a1a" stroke-width="1"/><rect x="7.5" y="1" width="1.6" height="15" fill="#9a6414"/><rect x="1" y="7.5" width="14" height="1.6" fill="#9a6414"/><path d="M9 10 L15 13 L9 16 Z" fill="#3fae3f"/></svg>
<div style="left:80px;top:451px;width:9px;height:9px;background:linear-gradient(#ffffff,#e6e6e6);border:1px solid #8a8a8a;border-radius:2px"></div>
<div style="left:82px;top:455px;width:5px;height:1px;background:#34346a"></div>
<div style="left:84px;top:453px;width:1px;height:5px;background:#34346a"></div>
<div style="left:90px;top:455px;width:5px;height:1px;background:repeating-linear-gradient(to right,#6a6a6a 0 1px,transparent 1px 2px)"></div>
<svg style="position:absolute;left:95px;top:447px" width="17" height="17" viewBox="0 0 17 17"><path d="M0.5 5.8 Q0.5 4.6 1.7 4.6 L7 4.6 L7.6 2 Q8.6 0.8 9.6 2 L11.6 5 L11.8 11 Q11.6 13 9.6 13 L7.2 13 Q5.2 12.8 5.2 11 L5.2 8.8 L1.7 8.8 Q0.5 8.8 0.5 7.6 Z" fill="#f2a65e"/><path d="M5.5 6.5 L10 6.5 M6 9 L10 9" stroke="#e08a40" stroke-width="0.7"/><rect x="13.2" y="4.8" width="2.8" height="8.2" fill="#2c3a52"/></svg>
<div style="left:80px;top:469px;width:9px;height:9px;background:linear-gradient(#ffffff,#e6e6e6);border:1px solid #8a8a8a;border-radius:2px"></div>
<div style="left:82px;top:473px;width:5px;height:1px;background:#34346a"></div>
<div style="left:84px;top:471px;width:1px;height:5px;background:#34346a"></div>
<div style="left:90px;top:473px;width:5px;height:1px;background:repeating-linear-gradient(to right,#6a6a6a 0 1px,transparent 1px 2px)"></div>
<svg style="position:absolute;left:96px;top:463px" width="15" height="19" viewBox="0 0 15 19"><text x="7" y="15.2" text-anchor="middle" font-family="Liberation Sans" font-weight="bold" font-size="17" fill="#f4c832" stroke="#2e2e16" stroke-width="2.2" paint-order="stroke" transform="translate(7 9) scale(1.15 1) translate(-7 -9)">§</text></svg>
<div style="left:80px;top:487px;width:9px;height:9px;background:linear-gradient(#ffffff,#e6e6e6);border:1px solid #8a8a8a;border-radius:2px"></div>
<div style="left:82px;top:491px;width:5px;height:1px;background:#34346a"></div>
<div style="left:84px;top:489px;width:1px;height:5px;background:#34346a"></div>
<div style="left:90px;top:491px;width:5px;height:1px;background:repeating-linear-gradient(to right,#6a6a6a 0 1px,transparent 1px 2px)"></div>
<svg style="position:absolute;left:96px;top:481px" width="15" height="19" viewBox="0 0 15 19"><text x="7" y="15.2" text-anchor="middle" font-family="Liberation Sans" font-weight="bold" font-size="17" fill="#f4c832" stroke="#2e2e16" stroke-width="2.2" paint-order="stroke" transform="translate(7 9) scale(1.15 1) translate(-7 -9)">§</text></svg>
<div style="left:80px;top:505px;width:9px;height:9px;background:linear-gradient(#ffffff,#e6e6e6);border:1px solid #8a8a8a;border-radius:2px"></div>
<div style="left:82px;top:509px;width:5px;height:1px;background:#34346a"></div>
<div style="left:84px;top:507px;width:1px;height:5px;background:#34346a"></div>
<div style="left:90px;top:509px;width:5px;height:1px;background:repeating-linear-gradient(to right,#6a6a6a 0 1px,transparent 1px 2px)"></div>
<svg style="position:absolute;left:95px;top:501px" width="17" height="17" viewBox="0 0 17 17"><path d="M9.2 2.6 A6 6 0 0 1 14.3 10.6" stroke="#48a030" stroke-width="2.8" fill="none"/><path d="M12.6 13.4 A6 6 0 0 1 4 13.3" stroke="#48a030" stroke-width="2.8" fill="none"/><path d="M2.4 10 A6 6 0 0 1 5.4 3.4" stroke="#48a030" stroke-width="2.8" fill="none"/><path d="M5.2 0.6 L10 2.8 L6 6 Z M16.4 8.4 L14.8 13.4 L11.6 9.8 Z M6 16.2 L1.6 13 L6.6 11.4 Z" fill="#48a030"/></svg>
<div style="left:80px;top:523px;width:9px;height:9px;background:linear-gradient(#ffffff,#e6e6e6);border:1px solid #8a8a8a;border-radius:2px"></div>
<div style="left:82px;top:527px;width:5px;height:1px;background:#34346a"></div>
<div style="left:84px;top:525px;width:1px;height:5px;background:#34346a"></div>
<div style="left:90px;top:527px;width:5px;height:1px;background:repeating-linear-gradient(to right,#6a6a6a 0 1px,transparent 1px 2px)"></div>
<svg style="position:absolute;left:95px;top:519px" width="17" height="17" viewBox="0 0 17 17"><path d="M13.87,6.75 L15.70,6.78 L15.70,9.22 L13.87,9.25 L13.30,10.82 L14.69,12.02 L13.12,13.89 L11.69,12.73 L10.25,13.56 L10.54,15.38 L8.14,15.80 L7.79,14.00 L6.15,13.71 L5.20,15.28 L3.09,14.06 L3.99,12.46 L2.91,11.18 L1.18,11.78 L0.34,9.49 L2.06,8.84 L2.06,7.16 L0.34,6.51 L1.18,4.22 L2.91,4.82 L3.99,3.54 L3.09,1.94 L5.20,0.72 L6.15,2.29 L7.79,2.00 L8.14,0.20 L10.54,0.62 L10.25,2.44 L11.69,3.27 L13.12,2.11 L14.69,3.98 L13.30,5.18 Z" fill="#3a96de"/><circle cx="8" cy="8" r="4" fill="#3a96de" stroke="#c8ecfc" stroke-width="1.8"/><circle cx="8" cy="8" r="1.8" fill="#eef8fe"/><circle cx="12" cy="12.5" r="3.3" fill="#c8403a"/><path d="M12 9.2 A3.3 3.3 0 0 1 15.3 12.5 A3.3 3.3 0 0 1 12 15.8 Z" fill="#48a838"/><path d="M11 10 L13 15" stroke="#7a4a9a" stroke-width="0.8"/></svg>
<div style="left:80px;top:541px;width:9px;height:9px;background:linear-gradient(#ffffff,#e6e6e6);border:1px solid #8a8a8a;border-radius:2px"></div>
<div style="left:82px;top:545px;width:5px;height:1px;background:#34346a"></div>
<div style="left:84px;top:543px;width:1px;height:5px;background:#34346a"></div>
<div style="left:90px;top:545px;width:5px;height:1px;background:repeating-linear-gradient(to right,#6a6a6a 0 1px,transparent 1px 2px)"></div>
<svg style="position:absolute;left:95px;top:537px" width="17" height="17" viewBox="0 0 17 17"><rect x="4" y="1" width="9" height="15" rx="1" fill="#5b6270"/><rect x="5" y="2" width="3" height="13" fill="#7a8190"/><rect x="2" y="3" width="2" height="1" fill="#9aa"/><rect x="13" y="3" width="2" height="1" fill="#9aa"/><rect x="2" y="6" width="2" height="1" fill="#9aa"/><rect x="13" y="6" width="2" height="1" fill="#9aa"/><rect x="2" y="9" width="2" height="1" fill="#9aa"/><rect x="13" y="9" width="2" height="1" fill="#9aa"/><rect x="2" y="12" width="2" height="1" fill="#9aa"/><rect x="13" y="12" width="2" height="1" fill="#9aa"/></svg>
<div style="left:80px;top:559px;width:9px;height:9px;background:linear-gradient(#ffffff,#e6e6e6);border:1px solid #8a8a8a;border-radius:2px"></div>
<div style="left:82px;top:563px;width:5px;height:1px;background:#34346a"></div>
<div style="left:84px;top:561px;width:1px;height:5px;background:#34346a"></div>
<div style="left:90px;top:563px;width:5px;height:1px;background:repeating-linear-gradient(to right,#6a6a6a 0 1px,transparent 1px 2px)"></div>
<svg style="position:absolute;left:95px;top:555px" width="17" height="17" viewBox="0 0 17 17"><path d="M6 11 L11 6" stroke="#2a88d8" stroke-width="2.4"/><rect x="0.8" y="9" width="8" height="5" rx="2.5" transform="rotate(-45 4.8 11.5)" fill="none" stroke="#2a88d8" stroke-width="2.2"/><rect x="8.2" y="3" width="8" height="5" rx="2.5" transform="rotate(-45 12.2 5.5)" fill="none" stroke="#2a88d8" stroke-width="2.2"/></svg>
<div style="left:80px;top:577px;width:9px;height:9px;background:linear-gradient(#ffffff,#e6e6e6);border:1px solid #8a8a8a;border-radius:2px"></div>
<div style="left:82px;top:581px;width:5px;height:1px;background:#34346a"></div>
<div style="left:84px;top:579px;width:1px;height:5px;background:#34346a"></div>
<div style="left:90px;top:581px;width:5px;height:1px;background:repeating-linear-gradient(to right,#6a6a6a 0 1px,transparent 1px 2px)"></div>
<svg style="position:absolute;left:95px;top:573px" width="17" height="17" viewBox="0 0 17 17"><path d="M8.5 1 L16.5 15.5 L0.5 15.5 Z" fill="#f5c518" stroke="#d9a000" stroke-width="0.8" stroke-linejoin="round"/><rect x="7.6" y="5.5" width="1.8" height="6" fill="#3a3a3a"/><rect x="7.6" y="12.5" width="1.8" height="1.8" fill="#3a3a3a"/></svg>
<div style="left:61px;top:595px;width:9px;height:9px;background:linear-gradient(#ffffff,#e6e6e6);border:1px solid #8a8a8a;border-radius:2px"></div>
<div style="left:63px;top:599px;width:5px;height:1px;background:#34346a"></div>
<div style="left:65px;top:597px;width:1px;height:5px;background:#34346a"></div>
<div style="left:71px;top:599px;width:6px;height:1px;background:repeating-linear-gradient(to right,#6a6a6a 0 1px,transparent 1px 2px)"></div>
<svg style="position:absolute;left:76px;top:591px" width="16" height="16" viewBox="0 0 16 16"><rect x="5" y="2" width="10" height="9" fill="#1a78cc"/><rect x="1" y="6" width="10" height="9" fill="#2a9ae6"/><rect x="1" y="6" width="10" height="1" fill="#55b4f0"/></svg>
<div style="left:61px;top:613px;width:9px;height:9px;background:linear-gradient(#ffffff,#e6e6e6);border:1px solid #8a8a8a;border-radius:2px"></div>
<div style="left:63px;top:617px;width:5px;height:1px;background:#34346a"></div>
<div style="left:65px;top:615px;width:1px;height:5px;background:#34346a"></div>
<div style="left:71px;top:617px;width:6px;height:1px;background:repeating-linear-gradient(to right,#6a6a6a 0 1px,transparent 1px 2px)"></div>
<svg style="position:absolute;left:76px;top:609px" width="16" height="16" viewBox="0 0 16 16"><rect x="5" y="2" width="10" height="9" fill="#1a78cc"/><rect x="1" y="6" width="10" height="9" fill="#2a9ae6"/><rect x="1" y="6" width="10" height="1" fill="#55b4f0"/></svg>
<div style="left:61px;top:631px;width:9px;height:9px;background:linear-gradient(#ffffff,#e6e6e6);border:1px solid #8a8a8a;border-radius:2px"></div>
<div style="left:63px;top:635px;width:5px;height:1px;background:#34346a"></div>
<div style="left:65px;top:633px;width:1px;height:5px;background:#34346a"></div>
<div style="left:71px;top:635px;width:6px;height:1px;background:repeating-linear-gradient(to right,#6a6a6a 0 1px,transparent 1px 2px)"></div>
<svg style="position:absolute;left:76px;top:627px" width="16" height="16" viewBox="0 0 16 16"><rect x="5" y="2" width="10" height="9" fill="#1a78cc"/><rect x="1" y="6" width="10" height="9" fill="#2a9ae6"/><rect x="1" y="6" width="10" height="1" fill="#55b4f0"/></svg>
<div style="left:61px;top:649px;width:9px;height:9px;background:linear-gradient(#ffffff,#e6e6e6);border:1px solid #8a8a8a;border-radius:2px"></div>
<div style="left:63px;top:653px;width:5px;height:1px;background:#34346a"></div>
<div style="left:65px;top:651px;width:1px;height:5px;background:#34346a"></div>
<div style="left:71px;top:653px;width:6px;height:1px;background:repeating-linear-gradient(to right,#6a6a6a 0 1px,transparent 1px 2px)"></div>
<svg style="position:absolute;left:76px;top:645px" width="16" height="16" viewBox="0 0 16 16"><rect x="5" y="2" width="10" height="9" fill="#1a78cc"/><rect x="1" y="6" width="10" height="9" fill="#2a9ae6"/><rect x="1" y="6" width="10" height="1" fill="#55b4f0"/></svg>
<div style="left:61px;top:667px;width:9px;height:9px;background:linear-gradient(#ffffff,#e6e6e6);border:1px solid #8a8a8a;border-radius:2px"></div>
<div style="left:63px;top:671px;width:5px;height:1px;background:#34346a"></div>
<div style="left:65px;top:669px;width:1px;height:5px;background:#34346a"></div>
<div style="left:71px;top:671px;width:6px;height:1px;background:repeating-linear-gradient(to right,#6a6a6a 0 1px,transparent 1px 2px)"></div>
<svg style="position:absolute;left:76px;top:663px" width="16" height="16" viewBox="0 0 16 16"><rect x="5" y="2" width="10" height="9" fill="#1a78cc"/><rect x="1" y="6" width="10" height="9" fill="#2a9ae6"/><rect x="1" y="6" width="10" height="1" fill="#55b4f0"/></svg>
<div style="left:244px;top:286px;width:15px;height:276px;background:#cdcdcd"></div>
<svg style="position:absolute;left:246px;top:161px" width="11" height="9" viewBox="0 0 11 9"><path d="M2.3 6.2 L5.5 3 L8.7 6.2" stroke="#4a4a4a" stroke-width="2" fill="none"/></svg>
<svg style="position:absolute;left:246px;top:670px" width="11" height="9" viewBox="0 0 11 9"><path d="M2.3 2 L5.5 5.2 L8.7 2" stroke="#4a4a4a" stroke-width="2" fill="none"/></svg>
<svg style="position:absolute;left:26px;top:20px" width="17" height="17" viewBox="0 0 17 17"><path d="M1.5 3.5 L1.5 12.5 Q7 15.5 12.5 12.5 L12.5 3.5" fill="#cfe4a8"/><path d="M1.5 6.8 Q7 9.8 12.5 6.8 M1.5 10 Q7 13 12.5 10" stroke="#a6c86e" stroke-width="1.5" fill="none"/><ellipse cx="7" cy="3.5" rx="5.5" ry="2.2" fill="#f4f8ec" stroke="#c4d0b4" stroke-width="0.8"/><circle cx="10.8" cy="9.8" r="3.4" fill="#fbfcfa" stroke="#c0c8bc" stroke-width="1.2"/><path d="M13.2 12.4 L15.5 15.2" stroke="#b4c898" stroke-width="1.8"/></svg>
<div style="left:740px;top:28px;width:10px;height:1px;background:#6e6e6e"></div>
<div style="left:785px;top:23px;width:10px;height:10px;border:1px solid #6e6e6e"></div>
<svg style="position:absolute;left:830px;top:22px" width="12" height="12" viewBox="0 0 12 12"><path d="M1 1 L11 11 M11 1 L1 11" stroke="#6e6e6e" stroke-width="1.1"/></svg>
<div style="left:21px;top:76px;width:3px;height:1px;background:#a0a0a0"></div>
<div style="left:21px;top:78px;width:3px;height:1px;background:#a0a0a0"></div>
<div style="left:21px;top:80px;width:3px;height:1px;background:#a0a0a0"></div>
<div style="left:21px;top:82px;width:3px;height:1px;background:#a0a0a0"></div>
<div style="left:21px;top:84px;width:3px;height:1px;background:#a0a0a0"></div>
<div style="left:21px;top:86px;width:3px;height:1px;background:#a0a0a0"></div>
<div style="left:21px;top:88px;width:3px;height:1px;background:#a0a0a0"></div>
<div style="left:21px;top:90px;width:3px;height:1px;background:#a0a0a0"></div>
<svg style="position:absolute;left:29px;top:77px" width="17" height="17" viewBox="0 0 17 17"><path d="M0.5 2 L5.5 2 L7 3.5 L14 3.5 L14 13 L0.5 13 Z" fill="#e9b640"/><path d="M0.5 6.5 L15.5 6.5 L15.5 14.5 L0.5 14.5 Z" fill="#fbd35c"/></svg>
<svg style="position:absolute;left:51px;top:77px" width="17" height="17" viewBox="0 0 17 17"><path d="M0.5 2 L5.5 2 L7 3.5 L14 3.5 L14 13 L0.5 13 Z" fill="#e9b640"/><path d="M0.5 6.5 L15.5 6.5 L15.5 14.5 L0.5 14.5 Z" fill="#fbd35c"/><path d="M15.32,10.82 L16.24,10.83 L16.24,12.17 L15.32,12.18 L14.97,13.02 L15.62,13.67 L14.67,14.62 L14.02,13.97 L13.18,14.32 L13.17,15.24 L11.83,15.24 L11.82,14.32 L10.98,13.97 L10.33,14.62 L9.38,13.67 L10.03,13.02 L9.68,12.18 L8.76,12.17 L8.76,10.83 L9.68,10.82 L10.03,9.98 L9.38,9.33 L10.33,8.38 L10.98,9.03 L11.82,8.68 L11.83,7.76 L13.17,7.76 L13.18,8.68 L14.02,9.03 L14.67,8.38 L15.62,9.33 L14.97,9.98 Z" fill="#2a90e0"/><circle cx="12.5" cy="11.5" r="1.8" fill="#d8efff"/></svg>
<svg style="position:absolute;left:74px;top:76px" width="17" height="17" viewBox="0 0 17 17"><path d="M0.5 0.5 L13 0.5 L15.5 3 L15.5 15.5 L0.5 15.5 Z" fill="#8e8e8e"/><rect x="3" y="1" width="9" height="5" fill="#f0f0f0"/><rect x="3.5" y="9" width="9" height="6.5" fill="#f0f0f0"/><rect x="5" y="10.5" width="2" height="5" fill="#8e8e8e"/></svg>
<svg style="position:absolute;left:96px;top:76px" width="17" height="17" viewBox="0 0 17 17"><path d="M0.5 0.5 L13 0.5 L15.5 3 L15.5 15.5 L0.5 15.5 Z" fill="#bdbdbd"/><rect x="3" y="1" width="9" height="5" fill="#f0f0f0"/><rect x="3.5" y="9" width="9" height="6.5" fill="#f0f0f0"/><rect x="5" y="10.5" width="2" height="5" fill="#bdbdbd"/><path d="M5 15 L14 6 L16 8 L7 17 Z" fill="#c8c8c8"/><path d="M14 3 L17 6" stroke="#888" stroke-width="1.5"/></svg>
<div style="left:116px;top:73px;width:1px;height:20px;background:#a8a8a8"></div>
<svg style="position:absolute;left:122px;top:76px" width="17" height="17" viewBox="0 0 17 17"><path d="M8 1 L8 12 L5 12 Q0.5 9 0.5 6.5 Q0.5 4 5 1 Z" fill="#6c7c8c"/><rect x="5" y="1" width="3" height="11" fill="#9aa8b6"/><rect x="8" y="3" width="6" height="1.6" fill="#d8b040"/><rect x="8" y="8" width="6" height="1.6" fill="#d8b040"/><path d="M8.5 11.5 L15.5 11.5 M12 8 L12 15" stroke="#3aae3a" stroke-width="2.2"/></svg>
<svg style="position:absolute;left:144px;top:76px" width="17" height="17" viewBox="0 0 17 17"><path d="M8 1 L8 12 L5 12 Q0.5 9 0.5 6.5 Q0.5 4 5 1 Z" fill="#6c7c8c"/><rect x="5" y="1" width="3" height="11" fill="#9aa8b6"/><rect x="8" y="3" width="6" height="1.6" fill="#d8b040"/><rect x="8" y="8" width="6" height="1.6" fill="#d8b040"/><path d="M9 9 L15 15 M15 9 L9 15" stroke="#e02828" stroke-width="2"/></svg>
<div style="left:165px;top:73px;width:1px;height:20px;background:#a8a8a8"></div>
<svg style="position:absolute;left:173px;top:75px" width="16" height="17" viewBox="0 0 16 17"><rect x="1" y="0.5" width="10" height="15" fill="#a8a8a8"/><rect x="2" y="1.5" width="8" height="13" fill="#b8b8b8"/><path d="M2 4.5 H10 M2 7.5 H10 M2 10.5 H10" stroke="#999" stroke-width="1"/><rect x="11" y="11" width="3" height="2" fill="#a8a8a8"/></svg>
<div style="left:192px;top:73px;width:1px;height:20px;background:#a8a8a8"></div>
<svg style="position:absolute;left:197px;top:75px" width="17" height="17" viewBox="0 0 17 17"><path d="M2.5 2.5 Q5.5 0 8 2.5 L7 4 L14.5 12 Q15.5 14 14 15 Q12.5 16 11.5 14.5 L4.5 6 L2.5 6.5 Q1 5 2.5 2.5 Z" fill="#a4a4a4"/><path d="M9.5 3.5 L12 1 L16 5 L13.5 7.5 Z" fill="#8e8e8e"/><path d="M11.5 5.5 L3 14" stroke="#9a9a9a" stroke-width="1.6"/><path d="M2.2 15 L7.2 10" stroke="#d8902c" stroke-width="2.8" stroke-linecap="round"/></svg>
<div style="left:219px;top:73px;width:1px;height:20px;background:#a8a8a8"></div>
<svg style="position:absolute;left:224px;top:75px" width="17" height="17" viewBox="0 0 17 17"><rect x="1.5" y="1.5" width="13" height="14" fill="#cfe8fb" stroke="#2f86d6"/><line x1="5.0" y1="2" x2="5.0" y2="15" stroke="#5aa6e4"/><line x1="8.0" y1="2" x2="8.0" y2="15" stroke="#5aa6e4"/><line x1="11.0" y1="2" x2="11.0" y2="15" stroke="#5aa6e4"/><line x1="2" y1="5.0" x2="14" y2="5.0" stroke="#5aa6e4"/><line x1="2" y1="8.5" x2="14" y2="8.5" stroke="#5aa6e4"/><line x1="2" y1="12.0" x2="14" y2="12.0" stroke="#5aa6e4"/><circle cx="5" cy="5" r="4.2" fill="#fff" stroke="#2f86d6" stroke-width="1.2"/><path d="M3.3 3.8 L5 5.3 L6.7 3.8" stroke="#d03030" stroke-width="1" fill="none"/></svg>
<svg style="position:absolute;left:246px;top:75px" width="17" height="17" viewBox="0 0 17 17"><path d="M5 13.5 L13.5 13.5 L13.5 5" stroke="#a8d8f0" stroke-width="2" fill="none"/><circle cx="6.5" cy="6" r="5" fill="#fff" stroke="#2f80c8" stroke-width="1.3"/><path d="M4.5 4.5 L6.5 6.5 L8.5 4.5" stroke="#e04040" stroke-width="1" fill="none"/></svg>
<div style="left:268px;top:73px;width:1px;height:20px;background:#a8a8a8"></div>
<svg style="position:absolute;left:275px;top:75px" width="17" height="17" viewBox="0 0 17 17"><path d="M1 1 L13 8.5 L1 15.5 Z" fill="#50b050"/><path d="M9.5 12.5 L15.5 12.5 M12.5 9.5 L12.5 15.5" stroke="#3a9a3a" stroke-width="2"/></svg>
<svg style="position:absolute;left:33px;top:103px" width="11" height="17" viewBox="0 0 11 17"><rect x="0.5" y="0.5" width="10" height="16" rx="1" fill="#2a4a6a"/><rect x="2" y="2" width="7" height="13" fill="#3aa0e8"/><path d="M2 5.5 H9 M2 9 H9 M2 12.5 H9" stroke="#7cc8f4" stroke-width="1"/></svg>
<svg style="position:absolute;left:121px;top:103px" width="17" height="17" viewBox="0 0 17 17"><path d="M4 1 L15.5 1 L12.5 15.5 L1 15.5 Q0.5 13 2.5 12.5 Z" fill="#f8dc80" stroke="#e0b040" stroke-width="0.8"/><path d="M1 15.5 Q3 12 5 13.5" stroke="#e0b040" fill="#f0c050"/></svg>
<svg style="position:absolute;left:187px;top:103px" width="16" height="16" viewBox="0 0 16 16"><path d="M8 0.5 L10.2 5.6 L15.5 5.9 L11.4 9.4 L12.8 15 L8 12 L3.2 15 L4.6 9.4 L0.5 5.9 L5.8 5.6 Z" fill="#f6c531" stroke="#e0a010" stroke-width="0.6"/></svg>
<svg style="position:absolute;left:20px;top:131px" width="18" height="16" viewBox="0 0 18 16"><path d="M4 11 Q1 8 3 5 Q5 2.5 9 3.5" stroke="#b4b4b4" stroke-width="2.4" fill="none"/><path d="M8 0 L12 3.5 L8 7 Z" fill="#b4b4b4"/><path d="M13.5 5 Q16.5 8 14.5 11 Q12.5 13.5 8.5 12.5" stroke="#b4b4b4" stroke-width="2.4" fill="none"/><path d="M9.5 9 L5.5 12.5 L9.5 16 Z" fill="#b4b4b4"/></svg>
<div style="left:42px;top:129px;width:1px;height:20px;background:#a8a8a8"></div>
<svg style="position:absolute;left:50px;top:130px" width="16" height="17" viewBox="0 0 16 17"><rect x="0.5" y="0.5" width="10" height="16" rx="1" fill="#2a4a6a"/><rect x="2" y="2" width="7" height="13" fill="#3aa0e8"/><path d="M2 5.5 H9 M2 9 H9" stroke="#7cc8f4" stroke-width="1"/><path d="M6 12.5 L10 9.5 L10 11.5 L14.5 11.5 L14.5 13.5 L10 13.5 L10 15.5 Z" fill="#48b848"/></svg>
<svg style="position:absolute;left:70px;top:131px" width="17" height="17" viewBox="0 0 17 17"><path d="M0.5 2 L5.5 2 L7 3.5 L14 3.5 L14 13 L0.5 13 Z" fill="#d8d8d8"/><path d="M0.5 6.5 L15.5 6.5 L15.5 14.5 L0.5 14.5 Z" fill="#e6e6e6"/></svg>
<svg style="position:absolute;left:70px;top:131px" width="17" height="17" viewBox="0 0 17 17"><path d="M9 12 L16 12 M12.5 8.5 L12.5 15.5" stroke="#b0b0b0" stroke-width="2"/></svg>
<div style="left:91px;top:129px;width:1px;height:20px;background:#a8a8a8"></div>
<svg style="position:absolute;left:97px;top:131px" width="17" height="16" viewBox="0 0 17 16"><path d="M0.5 1 L13 1 L8.5 7 L8.5 15.5 L5.5 13 L5.5 7 Z" fill="#1c7fd0"/><circle cx="13" cy="3.5" r="2.2" fill="none" stroke="#1c7fd0" stroke-width="1.3"/></svg>
<svg style="position:absolute;left:122px;top:137px" width="7" height="4" viewBox="0 0 7 4"><path d="M0 0 L7 0 L3.5 4 Z" fill="#000"/></svg>
<div style="left:134px;top:129px;width:1px;height:20px;background:#a8a8a8"></div>
<svg style="position:absolute;left:139px;top:130px" width="18" height="17" viewBox="0 0 18 17"><path d="M2 2 L15.5 15.5 M15.5 2 L2 15.5" stroke="#1c78c8" stroke-width="2.6"/><circle cx="8.75" cy="8.75" r="4.2" fill="#2a8ad8"/><path d="M6.5 6 V11.5 M11 6 V11.5 M6 6.5 H11.5 M6 11 H11.5" stroke="#bfe0fa" stroke-width="1"/></svg>
<div style="left:161px;top:129px;width:1px;height:20px;background:#a8a8a8"></div>
<svg style="position:absolute;left:166px;top:132px" width="18" height="15" viewBox="0 0 18 15"><rect x="0.5" y="0.5" width="16" height="13" fill="#f2f2f2" stroke="#d6d6d6"/><rect x="1" y="1" width="15" height="1.6" fill="#c4c4c4"/><circle cx="12" cy="9" r="2.6" fill="#fafafa" stroke="#bdbdbd" stroke-width="1.1"/><path d="M10 11 L7.8 13.6" stroke="#bdbdbd" stroke-width="1.5"/></svg>
<svg style="position:absolute;left:192px;top:137px" width="7" height="4" viewBox="0 0 7 4"><path d="M0 0 L7 0 L3.5 4 Z" fill="#a8a8a8"/></svg>
<svg style="position:absolute;left:278px;top:102px" width="18" height="18" viewBox="0 0 18 18"><path d="M15.42,3.30 L16.44,3.30 L16.44,4.70 L15.42,4.70 L15.06,5.57 L15.78,6.29 L14.79,7.28 L14.07,6.56 L13.20,6.92 L13.20,7.94 L11.80,7.94 L11.80,6.92 L10.93,6.56 L10.21,7.28 L9.22,6.29 L9.94,5.57 L9.58,4.70 L8.56,4.70 L8.56,3.30 L9.58,3.30 L9.94,2.43 L9.22,1.71 L10.21,0.72 L10.93,1.44 L11.80,1.08 L11.80,0.06 L13.20,0.06 L13.20,1.08 L14.07,1.44 L14.79,0.72 L15.78,1.71 L15.06,2.43 Z" fill="#8a8a8a"/><circle cx="12.5" cy="4.0" r="1.5" fill="#fff"/><path d="M11.00,8.54 L12.43,8.56 L12.43,10.44 L11.00,10.46 L10.56,11.66 L11.64,12.59 L10.44,14.03 L9.33,13.12 L8.22,13.77 L8.45,15.17 L6.60,15.50 L6.34,14.10 L5.08,13.87 L4.35,15.10 L2.72,14.16 L3.42,12.92 L2.60,11.94 L1.25,12.41 L0.61,10.64 L1.94,10.14 L1.94,8.86 L0.61,8.36 L1.25,6.59 L2.60,7.06 L3.42,6.08 L2.72,4.84 L4.35,3.90 L5.08,5.13 L6.34,4.90 L6.60,3.50 L8.45,3.83 L8.22,5.23 L9.33,5.88 L10.44,4.97 L11.64,6.41 L10.56,7.34 Z" fill="#2a88d8"/><circle cx="6.5" cy="9.5" r="3.4" fill="#bfe2fb"/><circle cx="6.5" cy="9.5" r="2.2" fill="#2a88d8"/><circle cx="6.5" cy="9.5" r="1.2" fill="#fff"/></svg>
<svg style="position:absolute;left:268px;top:123px" width="30" height="28" viewBox="0 0 30 28"><path d="M24.09,7.67 L25.52,7.65 L25.52,9.55 L24.09,9.53 L23.61,10.69 L24.63,11.69 L23.29,13.03 L22.29,12.01 L21.13,12.49 L21.15,13.92 L19.25,13.92 L19.27,12.49 L18.11,12.01 L17.11,13.03 L15.77,11.69 L16.79,10.69 L16.31,9.53 L14.88,9.55 L14.88,7.65 L16.31,7.67 L16.79,6.51 L15.77,5.51 L17.11,4.17 L18.11,5.19 L19.27,4.71 L19.25,3.28 L21.15,3.28 L21.13,4.71 L22.29,5.19 L23.29,4.17 L24.63,5.51 L23.61,6.51 Z" fill="#6e7276"/><circle cx="20.2" cy="8.6" r="3.3" fill="#e8eef2"/><circle cx="20.2" cy="8.6" r="1.9" fill="#7a8288"/><path d="M17.25,16.59 L19.19,16.64 L19.19,19.36 L17.25,19.41 L16.60,21.19 L18.06,22.48 L16.31,24.57 L14.79,23.36 L13.15,24.30 L13.43,26.23 L10.75,26.70 L10.36,24.80 L8.50,24.47 L7.48,26.12 L5.12,24.76 L6.05,23.05 L4.83,21.60 L2.99,22.22 L2.06,19.66 L3.87,18.95 L3.87,17.05 L2.06,16.34 L2.99,13.78 L4.83,14.40 L6.05,12.95 L5.12,11.24 L7.48,9.88 L8.50,11.53 L10.36,11.20 L10.75,9.30 L13.43,9.77 L13.15,11.70 L14.79,12.64 L16.31,11.43 L18.06,13.52 L16.60,14.81 Z" fill="#2088d8"/><circle cx="10.6" cy="18" r="5.4" fill="#d8f2ff"/><circle cx="10.6" cy="18" r="3.4" fill="#4a88b8"/><circle cx="10.6" cy="18" r="2.2" fill="#8aa0b0"/></svg>
<svg style="position:absolute;left:277px;top:173px" width="18" height="18" viewBox="0 0 18 18"><path d="M2 15.5 L10 7.5" stroke="#d0852c" stroke-width="3.2" stroke-linecap="round"/><path d="M7 4 Q9 0.5 13 1.5 L17 6 L15 8 L13 6.5 L10 9.5 Z" fill="#b8bcc4"/></svg>
<svg style="position:absolute;left:403px;top:173px" width="16" height="18" viewBox="0 0 16 18"><circle cx="11" cy="4" r="3" fill="none" stroke="#9aa" stroke-width="1.6"/><path d="M8 6 L2 13" stroke="#7a8088" stroke-width="2.4"/><circle cx="6" cy="6" r="3" fill="#4a5a60"/><path d="M9 8 Q11 11 9 15" stroke="#f0c838" stroke-width="2.6" fill="none"/><circle cx="9" cy="15.5" r="2" fill="#f0b820"/></svg>
<svg style="position:absolute;left:269px;top:201px" width="17" height="18" viewBox="0 0 17 18"><rect x="1" y="1.5" width="11" height="15" fill="#2a90e0"/><rect x="1" y="1.5" width="11" height="2" fill="#60b8f0"/><rect x="7" y="9" width="8.5" height="8.5" fill="#404850"/><rect x="8.5" y="9.5" width="5.5" height="3" fill="#f0d090"/><rect x="9" y="14" width="4.5" height="3" fill="#e8e8e8"/></svg>
<svg style="position:absolute;left:289px;top:201px" width="18" height="18" viewBox="0 0 18 18"><path d="M5.5 0.5 L12.5 0.5 L17.5 5.5 L17.5 12.5 L12.5 17.5 L5.5 17.5 L0.5 12.5 L0.5 5.5 Z" fill="#a0a0a0"/><text x="9" y="11.2" text-anchor="middle" font-family="Liberation Sans" font-weight="bold" font-size="5.6" fill="#f4f4f4">STOP</text></svg>
<div style="left:311px;top:200px;width:1px;height:21px;background:#a8a8a8"></div>
<svg style="position:absolute;left:318px;top:202px" width="15" height="16" viewBox="0 0 15 16"><path d="M1 0.5 L14 8 L1 15.5 Z" fill="#4fae4f"/></svg>
<div style="left:338px;top:200px;width:1px;height:21px;background:#a8a8a8"></div>
<div style="left:341px;top:199px;width:23px;height:22px;background:#c6e2f8;border:1px solid #2e78c8"></div>
<svg style="position:absolute;left:344px;top:203px" width="17" height="17" viewBox="0 0 17 17"><path d="M8.5 1 L16.5 15.5 L0.5 15.5 Z" fill="#f5c518" stroke="#d9a000" stroke-width="0.8" stroke-linejoin="round"/><rect x="7.6" y="5.5" width="1.8" height="6" fill="#3a3a3a"/><rect x="7.6" y="12.5" width="1.8" height="1.8" fill="#3a3a3a"/></svg>
<div style="left:366px;top:200px;width:1px;height:21px;background:#a8a8a8"></div>
<svg style="position:absolute;left:371px;top:202px" width="17" height="17" viewBox="0 0 17 17"><path d="M0.5 2 L5.5 2 L7 3.5 L14 3.5 L14 13 L0.5 13 Z" fill="#e9b640"/><path d="M0.5 6.5 L15.5 6.5 L15.5 14.5 L0.5 14.5 Z" fill="#fbd35c"/></svg>
<svg style="position:absolute;left:392px;top:202px" width="18" height="18" viewBox="0 0 18 18"><rect x="1" y="0.5" width="12.5" height="12.5" fill="#454d58"/><rect x="2.5" y="1" width="9.5" height="3.5" fill="#f2f2f2"/><rect x="2.5" y="4.5" width="9.5" height="2" fill="#e07a30"/><path d="M5 16.5 L14 7.5 L16.5 10 L7.5 19 Z" fill="#f2c232"/><path d="M14 7.5 L15.5 6 L18 8.5 L16.5 10 Z" fill="#d83a3a"/></svg>
<div style="left:414px;top:200px;width:1px;height:21px;background:#a8a8a8"></div>
<svg style="position:absolute;left:420px;top:201px" width="17" height="18" viewBox="0 0 17 18"><path d="M4 1 L10 10 M13 1 L7 10" stroke="#1c80d4" stroke-width="2.2"/><circle cx="4.5" cy="13.5" r="3" fill="none" stroke="#1c80d4" stroke-width="2"/><circle cx="12.5" cy="13.5" r="3" fill="none" stroke="#1c80d4" stroke-width="2"/></svg>
<svg style="position:absolute;left:442px;top:202px" width="17" height="17" viewBox="0 0 17 17"><path d="M0.5 0.5 L7 0.5 L10 3.5 L10 12.5 L0.5 12.5 Z" fill="#eef4f8" stroke="#b8c8d4"/><path d="M5.5 4.5 L12 4.5 L15.5 8 L15.5 16.5 L5.5 16.5 Z" fill="#f4f8fb" stroke="#b8c8d4"/><path d="M2 3 H6 M2 5.5 H6 M2 8 H5 M7.5 8 H12 M7.5 10.5 H13.5 M7.5 13 H13.5" stroke="#a8bccc" stroke-width="1.2"/></svg>
<svg style="position:absolute;left:465px;top:201px" width="16" height="18" viewBox="0 0 16 18"><rect x="0.5" y="2" width="12.5" height="14.5" fill="#e2922e"/><rect x="4" y="0.5" width="5.5" height="3" fill="#a86818"/><rect x="7" y="9" width="7.5" height="8" fill="#f4f8fb" stroke="#a8bccc" stroke-width="0.8"/><path d="M8.5 11.5 H13 M8.5 14 H13" stroke="#8aa8c0" stroke-width="1"/></svg>
<div style="left:485px;top:200px;width:1px;height:21px;background:#a8a8a8"></div>
<svg style="position:absolute;left:490px;top:205px" width="18" height="12" viewBox="0 0 18 12"><path d="M4 1.5 L14 1.5 L15 5 L3 5 Z" fill="#3c4450"/><circle cx="4.5" cy="7" r="4" fill="#2a8ad8"/><circle cx="13.5" cy="7" r="4" fill="#2a8ad8"/><circle cx="4" cy="6.5" r="2" fill="#4ab0f4"/><circle cx="13" cy="6.5" r="2" fill="#4ab0f4"/></svg>
<svg style="position:absolute;left:512px;top:201px" width="18" height="18" viewBox="0 0 18 18"><path d="M4 5 Q8 0 13 3" stroke="#48a838" stroke-width="2" fill="none"/><path d="M12 0.5 L15.5 3.5 L11.5 5 Z" fill="#48a838"/><path d="M4 6.5 L14 6.5 L15 9 L3 9 Z" fill="#3c4450"/><circle cx="4.5" cy="10.5" r="3.8" fill="#2a8ad8"/><circle cx="13.5" cy="10.5" r="3.8" fill="#2a8ad8"/><path d="M13 16 Q10 14 7 15.5" stroke="#d83030" stroke-width="1.8" fill="none"/><path d="M8 13 L5.5 16 L9 17.5 Z" fill="#d83030"/></svg>
<svg style="position:absolute;left:758px;top:450px" width="18" height="18" viewBox="0 0 18 18"><circle cx="9" cy="9" r="7.8" fill="#d23c3c"/><path d="M5.6 5.6 L12.4 12.4 M12.4 5.6 L5.6 12.4" stroke="#fff" stroke-width="2.6"/></svg>
<svg style="position:absolute;left:277px;top:479px" width="17" height="17" viewBox="0 0 17 17"><path d="M5 1 L15.5 1 L12.5 15.5 L1 15.5 Q0.5 13 3 12.5 Z" fill="#f8dc80" stroke="#e8bc48" stroke-width="0.8"/><path d="M1 15.5 Q2 12 5 13.5 L4 15.5 Z" fill="#f0c050"/></svg>
<svg style="position:absolute;left:328px;top:479px" width="18" height="17" viewBox="0 0 18 17"><path d="M13.87,6.75 L15.70,6.78 L15.70,9.22 L13.87,9.25 L13.30,10.82 L14.69,12.02 L13.12,13.89 L11.69,12.73 L10.25,13.56 L10.54,15.38 L8.14,15.80 L7.79,14.00 L6.15,13.71 L5.20,15.28 L3.09,14.06 L3.99,12.46 L2.91,11.18 L1.18,11.78 L0.34,9.49 L2.06,8.84 L2.06,7.16 L0.34,6.51 L1.18,4.22 L2.91,4.82 L3.99,3.54 L3.09,1.94 L5.20,0.72 L6.15,2.29 L7.79,2.00 L8.14,0.20 L10.54,0.62 L10.25,2.44 L11.69,3.27 L13.12,2.11 L14.69,3.98 L13.30,5.18 Z" fill="#2a90e0"/><circle cx="8" cy="8" r="4" fill="#fff"/><circle cx="8" cy="8" r="2.6" fill="#2a90e0"/><rect x="9" y="8" width="8" height="8" fill="#d83838"/></svg>
<svg style="position:absolute;left:268px;top:507px" width="18" height="18" viewBox="0 0 18 18"><rect x="1" y="0.5" width="12.5" height="12.5" fill="#454d58"/><rect x="2.5" y="1" width="9.5" height="3.5" fill="#f2f2f2"/><rect x="2.5" y="4.5" width="9.5" height="2" fill="#e07a30"/><path d="M5 16.5 L14 7.5 L16.5 10 L7.5 19 Z" fill="#f2c232"/><path d="M14 7.5 L15.5 6 L18 8.5 L16.5 10 Z" fill="#d83a3a"/></svg>
<div style="left:290px;top:505px;width:1px;height:20px;background:#a8a8a8"></div>
<svg style="position:absolute;left:295px;top:507px" width="17" height="17" viewBox="0 0 17 17"><path d="M0.5 0.5 L7 0.5 L10 3.5 L10 12.5 L0.5 12.5 Z" fill="#eef4f8" stroke="#c8d4dc"/><path d="M5.5 4.5 L12 4.5 L15.5 8 L15.5 16.5 L5.5 16.5 Z" fill="#f4f8fb" stroke="#c8d4dc"/><path d="M2 3 H6 M2 5.5 H6 M2 8 H5 M7.5 8 H12 M7.5 10.5 H13.5 M7.5 13 H13.5" stroke="#b8c8d8" stroke-width="1.2"/></svg>
<div style="left:316px;top:505px;width:1px;height:20px;background:#a8a8a8"></div>
<svg style="position:absolute;left:322px;top:506px" width="16" height="18" viewBox="0 0 16 18"><rect x="5" y="0.5" width="6" height="2.5" fill="#2a90e0"/><rect x="0.5" y="2" width="15" height="3" fill="#2a90e0"/><rect x="1.5" y="5" width="13" height="12.5" fill="#8c949c"/><path d="M4.5 6 V17 M8 6 V17 M11.5 6 V17" stroke="#a8b0b8" stroke-width="1"/></svg>
<div style="left:341px;top:504px;width:22px;height:22px;background:#c8c8c8;border:1px solid #5a5a5a"></div>
<svg style="position:absolute;left:345px;top:507px" width="16" height="17" viewBox="0 0 16 17"><rect x="0.5" y="2" width="11" height="14" fill="#a8a8a8"/><rect x="3" y="0.5" width="6" height="2" fill="#a8a8a8"/><path d="M3 4 V15 M6 4 V15 M9 4 V15" stroke="#bcbcbc"/><rect x="6" y="7" width="9" height="9" fill="#787878"/></svg>
<div style="left:366px;top:505px;width:1px;height:20px;background:#a8a8a8"></div>
<svg style="position:absolute;left:372px;top:507px" width="14" height="17" viewBox="0 0 14 17"><rect x="0.5" y="0" width="13" height="1.8" fill="#808890"/><path d="M7 3 L2 8.5 L5.5 8.5 L5.5 16.5 L8.5 16.5 L8.5 8.5 L12 8.5 Z" fill="#1c70c0"/></svg>
<svg style="position:absolute;left:394px;top:507px" width="14" height="17" viewBox="0 0 14 17"><rect x="0.5" y="14.5" width="13" height="1.8" fill="#808890"/><path d="M7 13.5 L2 8 L5.5 8 L5.5 0 L8.5 0 L8.5 8 L12 8 Z" fill="#1c70c0"/></svg>
<div style="left:412px;top:504px;width:22px;height:22px;background:#acd6f8;border:1px solid #1c6cc4"></div>
<svg style="position:absolute;left:418px;top:507px" width="10" height="17" viewBox="0 0 10 17"><rect x="3" y="1" width="4" height="15" rx="2" fill="#2a88d8"/><rect x="3.5" y="3" width="3" height="3" fill="#e8f4fc"/><path d="M3 1 L7 1 M3 16 L7 16" stroke="#6a7480" stroke-width="1.5"/></svg>
<div style="left:437px;top:505px;width:1px;height:20px;background:#a8a8a8"></div>
<svg style="position:absolute;left:442px;top:507px" width="16" height="16" viewBox="0 0 16 16"><path d="M1.5 1.5 L6 6 M14.5 1.5 L10 6 M1.5 14.5 L6 10 M14.5 14.5 L10 10" stroke="#a8a8a8" stroke-width="2.2"/><path d="M0.5 0.5 L5 0.5 L0.5 5 Z M15.5 0.5 L11 0.5 L15.5 5 Z M0.5 15.5 L5 15.5 L0.5 11 Z M15.5 15.5 L11 15.5 L15.5 11 Z" fill="#a8a8a8"/></svg>
<svg style="position:absolute;left:464px;top:507px" width="17" height="16" viewBox="0 0 17 16"><path d="M1.5 1.5 L15.5 14.5 M15.5 1.5 L1.5 14.5" stroke="#a8a8a8" stroke-width="2.4"/><circle cx="8.5" cy="8" r="3.8" fill="#b4b4b4"/><path d="M7 5 V11 M10 5 V11 M5.5 6.5 H11.5 M5.5 9.5 H11.5" stroke="#d4d4d4" stroke-width="0.9"/></svg>
<div style="left:485px;top:505px;width:1px;height:20px;background:#a8a8a8"></div>
<svg style="position:absolute;left:491px;top:506px" width="16" height="18" viewBox="0 0 16 18"><rect x="1" y="1" width="14" height="1.4" fill="#808080"/><rect x="1" y="15.6" width="14" height="1.4" fill="#808080"/><circle cx="8" cy="4.5" r="1.1" fill="#b83048"/><circle cx="8" cy="13.5" r="1.1" fill="#b83048"/><path d="M8 6 V12" stroke="#f4d4dc" stroke-width="1"/></svg>
<svg style="position:absolute;left:516px;top:513px" width="7" height="4" viewBox="0 0 7 4"><path d="M0 0 L7 0 L3.5 4 Z" fill="#000"/></svg>
<svg style="position:absolute;left:745px;top:506px" width="18" height="18" viewBox="0 0 18 18"><circle cx="11" cy="6.5" r="4.6" fill="#fff" stroke="#a8a8a8" stroke-width="1.6"/><path d="M7.6 10 L2 15.5" stroke="#a8a8a8" stroke-width="2.4"/></svg>
<svg style="position:absolute;left:338px;top:557px" width="18" height="18" viewBox="0 0 18 18"><circle cx="9" cy="9" r="7.8" fill="#3c9c2c"/><path d="M4.8 9.2 L7.8 12.2 L13.4 6" stroke="#fff" stroke-width="2.4" fill="none"/></svg>
<svg style="position:absolute;left:338px;top:576px" width="18" height="18" viewBox="0 0 18 18"><circle cx="9" cy="9" r="7.8" fill="#d23c3c"/><path d="M5.6 5.6 L12.4 12.4 M12.4 5.6 L5.6 12.4" stroke="#fff" stroke-width="2.6"/></svg>
<svg style="position:absolute;left:338px;top:595px" width="18" height="18" viewBox="0 0 18 18"><circle cx="9" cy="9" r="7.8" fill="#d23c3c"/><path d="M5.6 5.6 L12.4 12.4 M12.4 5.6 L5.6 12.4" stroke="#fff" stroke-width="2.6"/></svg>
<svg style="position:absolute;left:737px;top:664px" width="18" height="18" viewBox="0 0 18 18"><circle cx="9" cy="9" r="7.6" fill="#3c9c2c"/><path d="M4.8 9.2 L7.8 12.2 L13.4 6" stroke="#fff" stroke-width="2.4" fill="none"/></svg>
<svg style="position:absolute;left:773px;top:664px" width="18" height="18" viewBox="0 0 18 18"><circle cx="9" cy="9" r="7.6" fill="#b8b8b8"/><path d="M5.6 5.6 L12.4 12.4 M12.4 5.6 L5.6 12.4" stroke="#fff" stroke-width="2.6"/></svg>
<svg style="position:absolute;left:659px;top:688px" width="15" height="14" viewBox="0 0 15 14"><rect x="0.5" y="0.5" width="14" height="13" fill="#f4f4f4" stroke="#d0d0d0"/><rect x="1" y="1" width="13" height="1.5" fill="#c8c8c8"/><circle cx="7.5" cy="4.5" r="0.9" fill="#a8a8a8"/><circle cx="7.5" cy="11" r="0.9" fill="#a8a8a8"/><circle cx="2.5" cy="8" r="0.9" fill="#a8a8a8"/><circle cx="12.5" cy="8" r="0.9" fill="#a8a8a8"/></svg>
<svg style="position:absolute;left:682px;top:687px" width="13" height="17" viewBox="0 0 13 17"><rect x="0" y="0" width="12" height="16" fill="#a8a8a8"/><path d="M1 4.5 H11 M1 8 H11 M1 11.5 H11" stroke="#bcbcbc" stroke-width="1"/></svg>
<svg style="position:absolute;left:702px;top:687px" width="17" height="17" viewBox="0 0 17 17"><path d="M6 0 H11 V3 H14 V6 H17 V11 H14 V14 H11 V17 H6 V14 H3 V11 H0 V6 H3 V3 H6 Z" fill="#a4a4a4"/><circle cx="8.5" cy="8.5" r="4" fill="#f0f0f0"/></svg>
<svg style="position:absolute;left:723px;top:686px" width="18" height="18" viewBox="0 0 18 18"><circle cx="9" cy="9" r="7.8" fill="#a4a4a4"/><path d="M5.6 5.6 L12.4 12.4 M12.4 5.6 L5.6 12.4" stroke="#f4f4f4" stroke-width="2.6"/></svg>
<svg style="position:absolute;left:841px;top:687px" width="16" height="16" viewBox="0 0 16 16"><rect x="4.5" y="0" width="6" height="2.5" fill="#3a8ad0"/><rect x="0" y="1.5" width="15" height="3" fill="#3a8ad0"/><rect x="1" y="4.5" width="13" height="11" fill="#8c98a8"/><path d="M4 5 V15 M7.5 5 V15 M11 5 V15" stroke="#a4b0bc" stroke-width="1"/></svg>
</body></html>
